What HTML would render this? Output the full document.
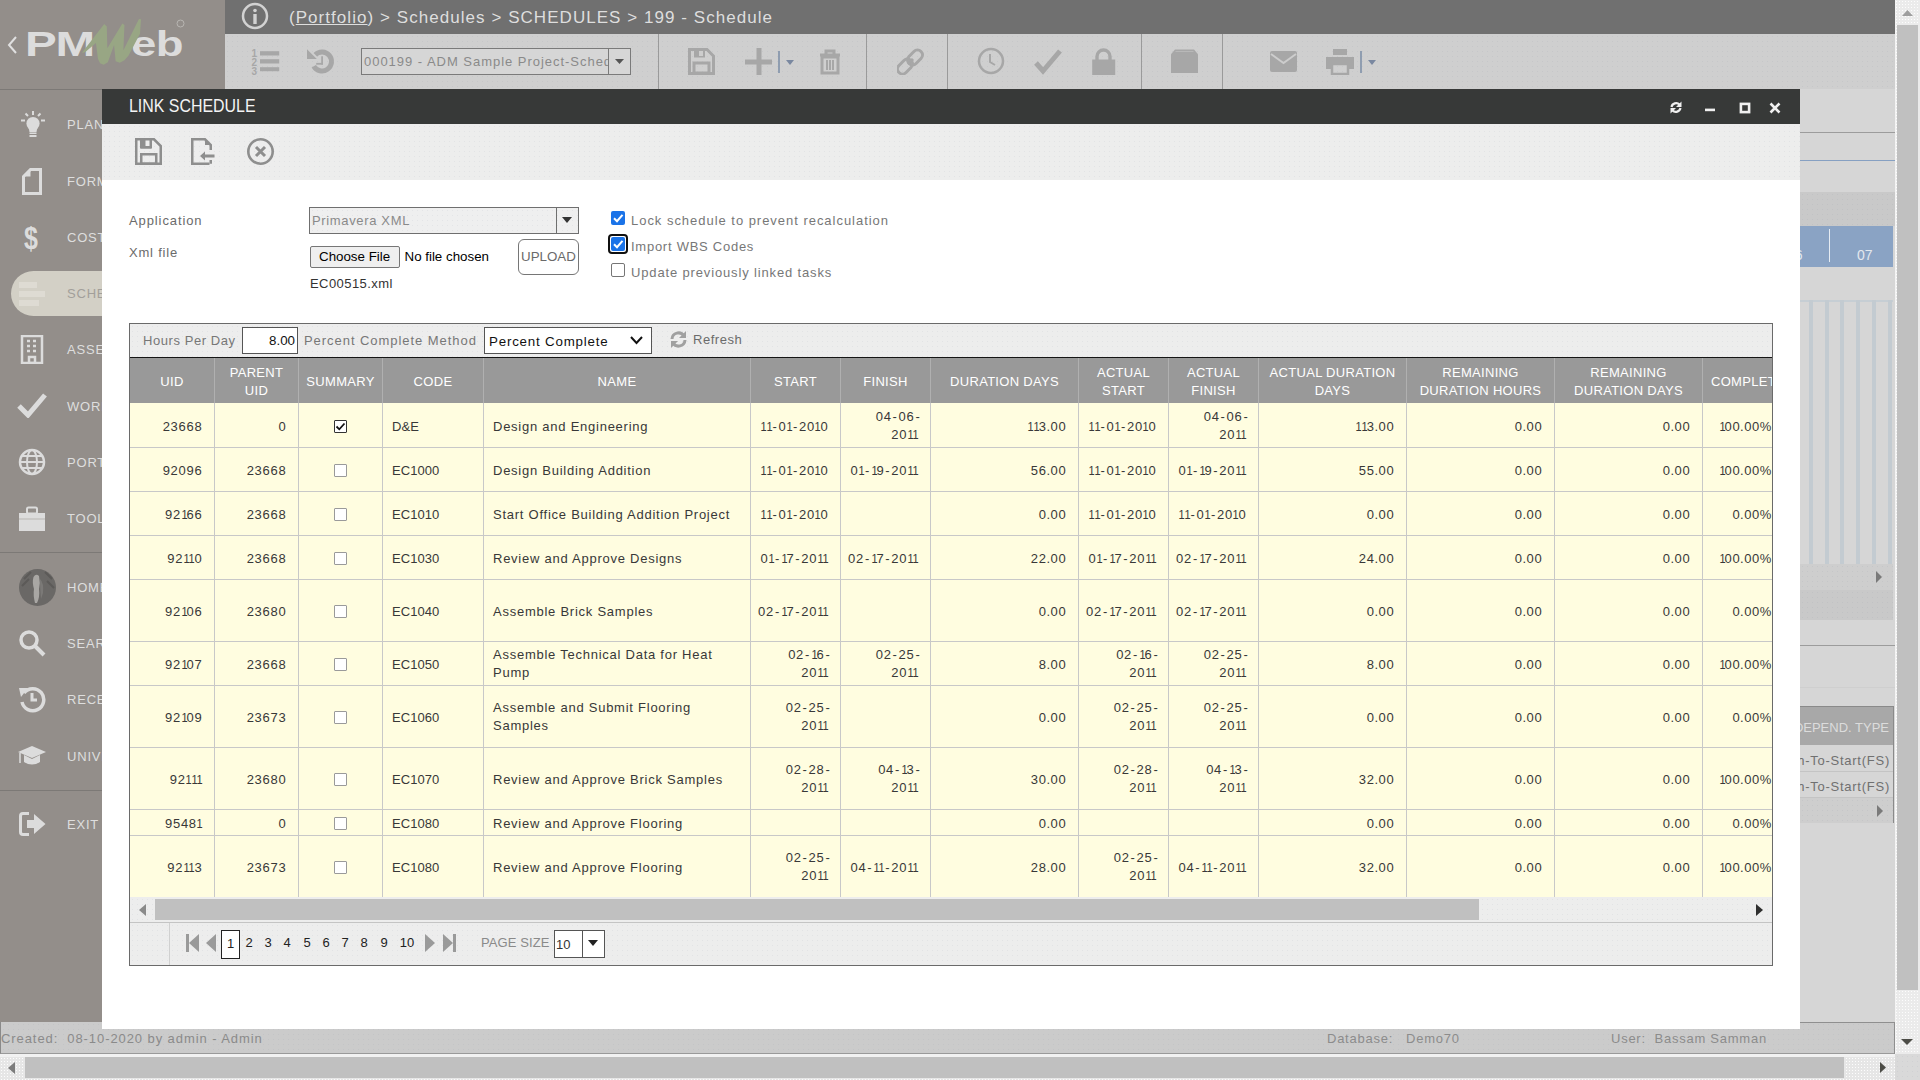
<!DOCTYPE html><html><head><meta charset="utf-8"><style>
html,body{margin:0;padding:0;width:1920px;height:1080px;overflow:hidden;background:#d6d6d6;font-family:"Liberation Sans", sans-serif;}
.b{position:absolute;box-sizing:border-box;}
.t{position:absolute;white-space:nowrap;font-family:"Liberation Sans", sans-serif;}
.clip{position:absolute;overflow:hidden;}
</style></head><body>
<div class="b" style="left:0px;top:0px;width:225px;height:1022px;background:#938e8a;"></div>
<div class="b" style="left:0px;top:89px;width:225px;height:1px;background:#7c7976;"></div>
<div class="b" style="left:0px;top:552px;width:225px;height:1px;background:#7c7976;"></div>
<div class="b" style="left:0px;top:790px;width:225px;height:1px;background:#7c7976;"></div>
<div class="b" style="left:11px;top:271px;width:250px;height:45px;background:#d3d0c6;border-radius:23px;"></div>
<svg class="b" style="left:7px;top:36px;" width="11" height="18" viewBox="0 0 11 18"><path d="M9 1 L2 9 L9 17" fill="none" stroke="#e0e0e0" stroke-width="2"/></svg>
<div class="t" style="left:25px;top:23.5px;font-size:35px;line-height:40px;font-weight:700;color:#dcdcdc;transform:scaleX(1.36);transform-origin:0 0;letter-spacing:-1px;">PM</div>
<div class="t" style="left:131px;top:24px;font-size:35px;line-height:40px;font-weight:700;color:#dcdcdc;transform:scaleX(1.3);transform-origin:0 0;letter-spacing:-0.5px;">eb</div>
<svg class="b" style="left:70px;top:14px;" width="80" height="56" viewBox="0 0 1543 1080"><path d="M230 745 L660 195 L710 240 L720 660 L1010 185 L1050 210 L1030 700 L1330 95 L1370 100 L1350 380 L1130 800 L1050 890 L960 940 L880 910 L850 600 L730 930 L650 980 L580 950 L540 870 L500 560 L290 740 Z" fill="#98a684"/></svg>
<svg class="b" style="left:176px;top:19px;" width="9" height="9" viewBox="0 0 9 9"><circle cx="4.5" cy="4.5" r="3.5" fill="none" stroke="#b8b6b2" stroke-width="1"/></svg>
<div class="t" style="left:67px;top:118.00px;font-size:13px;line-height:13px;color:#dedede;letter-spacing:0.8px;">PLANNING</div>
<div class="t" style="left:67px;top:175.00px;font-size:13px;line-height:13px;color:#dedede;letter-spacing:0.8px;">FORMS</div>
<div class="t" style="left:67px;top:231.00px;font-size:13px;line-height:13px;color:#dedede;letter-spacing:0.8px;">COSTS</div>
<div class="t" style="left:67px;top:287.00px;font-size:13px;line-height:13px;color:#a29f9a;letter-spacing:0.8px;">SCHEDULES</div>
<div class="t" style="left:67px;top:343.00px;font-size:13px;line-height:13px;color:#dedede;letter-spacing:0.8px;">ASSETS</div>
<div class="t" style="left:67px;top:400.00px;font-size:13px;line-height:13px;color:#dedede;letter-spacing:0.8px;">WORKFLOW</div>
<div class="t" style="left:67px;top:456.00px;font-size:13px;line-height:13px;color:#dedede;letter-spacing:0.8px;">PORTFOLIO</div>
<div class="t" style="left:67px;top:512.00px;font-size:13px;line-height:13px;color:#dedede;letter-spacing:0.8px;">TOOLS</div>
<div class="t" style="left:67px;top:581.00px;font-size:13px;line-height:13px;color:#dedede;letter-spacing:0.8px;">HOME</div>
<div class="t" style="left:67px;top:637.00px;font-size:13px;line-height:13px;color:#dedede;letter-spacing:0.8px;">SEARCH</div>
<div class="t" style="left:67px;top:693.00px;font-size:13px;line-height:13px;color:#dedede;letter-spacing:0.8px;">RECENT</div>
<div class="t" style="left:67px;top:750.00px;font-size:13px;line-height:13px;color:#dedede;letter-spacing:0.8px;">UNIVERSITY</div>
<div class="t" style="left:67px;top:818.00px;font-size:13px;line-height:13px;color:#dedede;letter-spacing:0.8px;">EXIT</div>
<svg class="b" style="left:18px;top:108px;" width="30" height="32" viewBox="0 0 30 32"><circle cx="15" cy="15.5" r="6.6" fill="#dcdcdc"/><path d="M10.5 19 H19.5 L18.5 24 H11.5 Z" fill="#dcdcdc"/><rect x="11.5" y="24.5" width="7" height="1.5" fill="#dcdcdc"/><rect x="11.5" y="27" width="7" height="2" fill="#dcdcdc"/><path d="M3 12.5h4M23 12.5h4M7.5 5.5l2.5 2.5M22.5 5.5l-2.5 2.5M15 3v4" stroke="#dcdcdc" stroke-width="2"/></svg>
<svg class="b" style="left:22px;top:168px;" width="21" height="28" viewBox="0 0 21 28"><path d="M1.5 8.5 L8.5 1.5 H18.5 V25.5 H1.5 Z" fill="none" stroke="#dcdcdc" stroke-width="3"/><path d="M1.5 8.5 L8.5 1.5 V8.5 Z" fill="#dcdcdc"/></svg>
<div class="t" style="left:24px;top:221px;font-size:32px;line-height:34px;color:#dcdcdc;font-weight:700;transform:scaleX(0.78);transform-origin:0 0;">$</div>
<svg class="b" style="left:19px;top:282px;" width="26" height="24" viewBox="0 0 26 24"><rect x="0" y="0" width="18" height="6" fill="#dedbd3"/><rect x="0" y="9" width="26" height="6" fill="#dedbd3"/><rect x="0" y="18" width="20" height="6" fill="#dedbd3"/></svg>
<svg class="b" style="left:20px;top:335px;" width="24" height="29" viewBox="0 0 24 29"><rect x="2" y="1" width="20" height="27" fill="none" stroke="#dcdcdc" stroke-width="2.5"/><path d="M7 6h3M13 6h3M7 11h3M13 11h3M7 16h3M13 16h3M9 22h6v6h-6z" stroke="#dcdcdc" stroke-width="2.5" fill="none"/></svg>
<svg class="b" style="left:17px;top:392px;" width="30" height="26" viewBox="0 0 30 26"><path d="M2 14 L11 23 L28 3" fill="none" stroke="#dcdcdc" stroke-width="5"/></svg>
<svg class="b" style="left:18px;top:448px;" width="28" height="28" viewBox="0 0 28 28"><circle cx="14" cy="14" r="12" fill="none" stroke="#dcdcdc" stroke-width="2.5"/><ellipse cx="14" cy="14" rx="5" ry="12" fill="none" stroke="#dcdcdc" stroke-width="2"/><path d="M2 14h24M4 8h20M4 20h20" stroke="#dcdcdc" stroke-width="2"/></svg>
<svg class="b" style="left:18px;top:506px;" width="28" height="26" viewBox="0 0 28 26"><rect x="1" y="7" width="26" height="18" fill="#dcdcdc"/><rect x="9" y="1.5" width="10" height="6" rx="1.5" fill="none" stroke="#dcdcdc" stroke-width="2"/><rect x="1" y="12.5" width="26" height="1" fill="#b8b5b1"/></svg>
<svg class="b" style="left:19px;top:569px;" width="37" height="37" viewBox="0 0 37 37"><circle cx="18.5" cy="18.5" r="18.5" fill="#6a6866"/><path d="M5 10 L12 3 M3 17 L10 10 M26 3 L33 10 M28 12 L35 19" stroke="#5c5a58" stroke-width="2"/><path d="M14.5 8 Q17 4 20 7 Q21.5 14 20 20 Q21 28 18 34 L16 34 Q14 26 15 20 Q13 13 14.5 8 Z" fill="#a9a7a4"/><path d="M21 10 Q25 14 24 24 L22 30 Q21 20 21 10 Z" fill="#7b7977"/></svg>
<svg class="b" style="left:18px;top:629px;" width="28" height="28" viewBox="0 0 28 28"><circle cx="11" cy="11" r="8" fill="none" stroke="#dcdcdc" stroke-width="3.5"/><path d="M17 17 L26 26" stroke="#dcdcdc" stroke-width="4"/></svg>
<svg class="b" style="left:18px;top:685px;" width="28" height="28" viewBox="0 0 28 28"><path d="M6 8 A11 11 0 1 1 4 17" fill="none" stroke="#dcdcdc" stroke-width="3.5"/><path d="M1 3 L10 3 L3 12 Z" fill="#dcdcdc"/><path d="M14 8v7h5" stroke="#dcdcdc" stroke-width="3" fill="none"/></svg>
<svg class="b" style="left:17px;top:744px;" width="30" height="24" viewBox="0 0 30 24"><path d="M1 8 L15 2 L29 8 L15 14 Z" fill="#dcdcdc"/><path d="M7 11v7q8 5 16 0v-7l-8 4z" fill="#dcdcdc"/><path d="M3 9v10" stroke="#dcdcdc" stroke-width="1.5"/></svg>
<svg class="b" style="left:18px;top:811px;" width="29" height="26" viewBox="0 0 29 26"><path d="M11 2.5 H5 Q2.5 2.5 2.5 5 V21 Q2.5 23.5 5 23.5 H11" fill="none" stroke="#dcdcdc" stroke-width="3"/><path d="M9 9 H16 V3 L27.5 13 L16 23 V17 H9 Z" fill="#dcdcdc"/></svg>
<div class="b" style="left:225px;top:0px;width:1670px;height:34px;background:#707070;"></div>
<svg class="b" style="left:241px;top:2px;" width="28" height="28" viewBox="0 0 28 28"><circle cx="14" cy="14" r="12" fill="none" stroke="#d2d2d2" stroke-width="2.5"/><circle cx="14" cy="8.5" r="1.8" fill="#d2d2d2"/><rect x="12.3" y="12" width="3.4" height="10" fill="#d2d2d2"/></svg>
<div class="t" style="left:289px;top:7px;font-size:17px;line-height:22px;color:#dedede;letter-spacing:1.05px;">(<span style="text-decoration:underline;">Portfolio</span>) &gt; Schedules &gt; SCHEDULES &gt; 199 - Schedule</div>
<div class="b" style="left:225px;top:34px;width:1670px;height:55px;background:#cfcfcf;background-image:radial-gradient(circle, rgba(90,110,130,0.07) 0.7px, transparent 0.9px);background-size:5px 5px;"></div>
<div class="b" style="left:658px;top:34px;width:1px;height:55px;background:#9a9a9a;"></div>
<div class="b" style="left:866px;top:34px;width:1px;height:55px;background:#9a9a9a;"></div>
<div class="b" style="left:947px;top:34px;width:1px;height:55px;background:#9a9a9a;"></div>
<div class="b" style="left:1141px;top:34px;width:1px;height:55px;background:#9a9a9a;"></div>
<div class="b" style="left:1222px;top:34px;width:1px;height:55px;background:#9a9a9a;"></div>
<svg class="b" style="left:251px;top:47px;" width="30" height="29" viewBox="0 0 30 29"><text x="0.5" y="9.5" font-size="10" font-family="Liberation Sans" font-weight="700" fill="#a7a7a7">1</text><text x="0.5" y="18.5" font-size="10" font-family="Liberation Sans" font-weight="700" fill="#a7a7a7">2</text><text x="0.5" y="27.5" font-size="10" font-family="Liberation Sans" font-weight="700" fill="#a7a7a7">3</text><rect x="9" y="4.2" width="19.2" height="4.3" fill="#a7a7a7"/><rect x="9" y="12.2" width="19.2" height="4.3" fill="#a7a7a7"/><rect x="9" y="20.2" width="19.2" height="4" fill="#a7a7a7"/></svg>
<svg class="b" style="left:306px;top:48px;" width="30" height="28" viewBox="0 0 30 28"><path d="M9.28 6.78 A9.5 9.5 0 1 1 7.77 18.25" fill="none" stroke="#a7a7a7" stroke-width="5"/><path d="M1 1.2 L1 10.9 L10.8 10.9 Z" fill="#a7a7a7"/><rect x="15.2" y="8.3" width="1.8" height="8.3" fill="#a7a7a7"/><rect x="10.2" y="14.9" width="6.8" height="1.8" fill="#a7a7a7"/></svg>
<div class="b" style="left:361px;top:48px;width:270px;height:27px;background:#d6d6d6;border:1px solid #7a7a7a;"></div>
<div class="b" style="left:608px;top:48px;width:1px;height:27px;background:#7a7a7a;"></div>
<svg class="b" style="left:615px;top:59px;" width="10" height="6" viewBox="0 0 10 6"><path d="M0 0 H9 L4.5 5 Z" fill="#555"/></svg>
<div class="clip" style="left:362px;top:49px;width:246px;height:25px;"><div class="t" style="left:2px;top:4px;font-size:13px;line-height:17px;color:#8a8a8a;letter-spacing:0.97px;">000199 - ADM Sample Project-Schedule</div></div>
<svg class="b" style="left:688px;top:48px;" width="27" height="27" viewBox="0 0 27 27"><path d="M1.5 1.5 H19 L25.5 8 V25.5 H1.5 Z" fill="none" stroke="#a7a7a7" stroke-width="3"/><rect x="6" y="1.5" width="11" height="8" fill="#a7a7a7"/><rect x="11" y="3" width="4" height="5" fill="#cdcdcd"/><rect x="6" y="15" width="15" height="10" fill="none" stroke="#a7a7a7" stroke-width="3"/></svg>
<svg class="b" style="left:745px;top:48px;" width="28" height="28" viewBox="0 0 28 28"><rect x="0" y="11.5" width="27" height="5" fill="#a7a7a7"/><rect x="11.5" y="0" width="5" height="27" fill="#a7a7a7"/></svg>
<div class="b" style="left:778px;top:51px;width:2px;height:22px;background:#8f9db0;"></div>
<svg class="b" style="left:786px;top:60px;" width="9" height="6" viewBox="0 0 9 6"><path d="M0 0 H8 L4 5 Z" fill="#7a88a0"/></svg>
<svg class="b" style="left:817px;top:48px;" width="26" height="27" viewBox="0 0 26 27"><path d="M3 7 H23 M9 7 V3 H17 V7" fill="none" stroke="#a7a7a7" stroke-width="3"/><path d="M5 9 H21 V25 H5 Z" fill="none" stroke="#a7a7a7" stroke-width="3"/><path d="M10 12v10M13 12v10M16 12v10" stroke="#a7a7a7" stroke-width="2"/></svg>
<svg class="b" style="left:897px;top:48px;" width="27" height="27" viewBox="0 0 27 27"><path d="M11 16 L16 11" stroke="#a7a7a7" stroke-width="3"/><rect x="13" y="1" width="10" height="17" rx="5" transform="rotate(45 18 9.5)" fill="none" stroke="#a7a7a7" stroke-width="3"/><rect x="3" y="10" width="10" height="17" rx="5" transform="rotate(45 8 18.5)" fill="none" stroke="#a7a7a7" stroke-width="3"/></svg>
<svg class="b" style="left:977px;top:47px;" width="28" height="28" viewBox="0 0 28 28"><circle cx="14" cy="14" r="12" fill="none" stroke="#a7a7a7" stroke-width="2.5"/><path d="M13 7 V15 L18 18" fill="none" stroke="#a7a7a7" stroke-width="2"/></svg>
<svg class="b" style="left:1034px;top:48px;" width="28" height="27" viewBox="0 0 28 27"><path d="M2 15 L9 23 L26 3" fill="none" stroke="#a7a7a7" stroke-width="5"/></svg>
<svg class="b" style="left:1091px;top:47px;" width="26" height="29" viewBox="0 0 26 29"><path d="M6 13 V9.5 A6.5 6.5 0 0 1 19 9.5 V13" fill="none" stroke="#a7a7a7" stroke-width="3.4"/><rect x="1.2" y="12.5" width="23" height="15.5" fill="#a7a7a7"/></svg>
<svg class="b" style="left:1171px;top:49px;" width="28" height="25" viewBox="0 0 28 25"><path d="M0 5.2 L4 0.5 H23 L27 5.2 V24 H0 Z" fill="#a7a7a7"/><path d="M4.5 2.5 H22.5" stroke="#bdbdbd" stroke-width="0.8"/></svg>
<svg class="b" style="left:1270px;top:51px;" width="28" height="22" viewBox="0 0 28 22"><rect x="0" y="0" width="27" height="21" rx="2" fill="#a7a7a7"/><path d="M1 3 L13.5 12 L26 3" fill="none" stroke="#cdcdcd" stroke-width="2"/></svg>
<svg class="b" style="left:1326px;top:49px;" width="28" height="26" viewBox="0 0 28 26"><rect x="7" y="0" width="14" height="6" fill="#a7a7a7"/><path d="M0 8 H28 V20 H23 V14 H5 V20 H0 Z" fill="#a7a7a7"/><rect x="6" y="15" width="16" height="10" fill="none" stroke="#a7a7a7" stroke-width="2.5"/></svg>
<div class="b" style="left:1360px;top:51px;width:2px;height:22px;background:#8f9db0;"></div>
<svg class="b" style="left:1368px;top:60px;" width="9" height="6" viewBox="0 0 9 6"><path d="M0 0 H8 L4 5 Z" fill="#7a88a0"/></svg>
<div class="b" style="left:1800px;top:89px;width:95px;height:933px;background:#d6d6d6;"></div>
<div class="b" style="left:1800px;top:132px;width:95px;height:1px;background:#9c9c9c;"></div>
<div class="b" style="left:1800px;top:160px;width:95px;height:1px;background:#86a0c2;"></div>
<div class="b" style="left:1800px;top:192px;width:95px;height:34px;background:#c9c9c9;background-image:radial-gradient(circle, rgba(90,110,130,0.07) 0.7px, transparent 0.9px);background-size:5px 5px;"></div>
<div class="b" style="left:1800px;top:226px;width:93px;height:41px;background:#8aa3c4;"></div>
<div class="b" style="left:1829px;top:229px;width:1px;height:33px;background:#e6ecf3;"></div>
<div class="t" style="left:1857px;top:248.15px;font-size:14px;line-height:14px;color:#e3e8ee;">07</div>
<div class="clip" style="left:1800px;top:226px;width:10px;height:41px;"><div class="t" style="left:-13px;top:22px;font-size:14px;line-height:14px;color:#e3e8ee;">06</div></div>
<div class="b" style="left:1800px;top:300px;width:93px;height:264px;background:#d6d6d6;"></div>
<div class="b" style="left:1800px;top:300px;width:93px;height:2px;background:#c6ced4;"></div>
<div class="b" style="left:1809px;top:300px;width:3.5px;height:264px;background:#c3cbd1;"></div>
<div class="b" style="left:1825px;top:300px;width:3.5px;height:264px;background:#c3cbd1;"></div>
<div class="b" style="left:1840px;top:300px;width:3.5px;height:264px;background:#c3cbd1;"></div>
<div class="b" style="left:1856px;top:300px;width:3.5px;height:264px;background:#c3cbd1;"></div>
<div class="b" style="left:1872px;top:300px;width:3.5px;height:264px;background:#c3cbd1;"></div>
<div class="b" style="left:1888px;top:300px;width:3.5px;height:264px;background:#c3cbd1;"></div>
<div class="b" style="left:1800px;top:564px;width:93px;height:26px;background:#cecece;background-image:radial-gradient(circle, rgba(90,110,130,0.07) 0.7px, transparent 0.9px);background-size:5px 5px;"></div>
<svg class="b" style="left:1876px;top:571px;" width="7" height="12" viewBox="0 0 7 12"><path d="M0 0 L6 6 L0 12 Z" fill="#7a7a7a"/></svg>
<div class="b" style="left:1800px;top:590px;width:93px;height:30px;background:#c9c9c9;background-image:radial-gradient(circle, rgba(90,110,130,0.07) 0.7px, transparent 0.9px);background-size:5px 5px;"></div>
<div class="b" style="left:1800px;top:645px;width:95px;height:1px;background:#9c9c9c;"></div>
<div class="b" style="left:1800px;top:687px;width:95px;height:1px;background:#cfcfcf;"></div>
<div class="b" style="left:1800px;top:706px;width:94px;height:1px;background:#8a8a8a;"></div>
<div class="b" style="left:1800px;top:707px;width:93px;height:38px;background:#a8a8a8;"></div>
<div class="clip" style="left:1800px;top:707px;width:93px;height:38px;"><div class="t" style="right:4px;top:14px;font-size:13px;line-height:13px;color:#dcdcdc;letter-spacing:0px;">DEPEND. TYPE</div></div>
<div class="clip" style="left:1800px;top:745px;width:93px;height:53px;"><div class="t" style="right:3px;top:9px;font-size:13px;line-height:13px;color:#707070;letter-spacing:0.75px;">Finish-To-Start(FS)</div><div class="t" style="right:3px;top:35px;font-size:13px;line-height:13px;color:#707070;letter-spacing:0.75px;">Finish-To-Start(FS)</div></div>
<div class="b" style="left:1800px;top:771px;width:93px;height:1px;background:#c4c4c4;"></div>
<div class="b" style="left:1800px;top:797px;width:93px;height:1px;background:#c4c4c4;"></div>
<div class="b" style="left:1800px;top:798px;width:93px;height:25px;background:#cecece;background-image:radial-gradient(circle, rgba(90,110,130,0.07) 0.7px, transparent 0.9px);background-size:5px 5px;"></div>
<svg class="b" style="left:1877px;top:805px;" width="7" height="12" viewBox="0 0 7 12"><path d="M0 0 L6 6 L0 12 Z" fill="#7a7a7a"/></svg>
<div class="b" style="left:1893px;top:706px;width:1px;height:117px;background:#8a8a8a;"></div>
<div class="b" style="left:1895px;top:0px;width:25px;height:1054px;background:#ebebeb;background-image:radial-gradient(circle, rgba(255,255,255,0.9) 0.8px, transparent 1px);background-size:3px 3px;"></div>
<div class="b" style="left:1895px;top:0px;width:1px;height:1054px;background:#f4f4f4;"></div>
<div class="b" style="left:1897px;top:25px;width:21px;height:965px;background:#c0c0c0;"></div>
<svg class="b" style="left:1902px;top:10px;" width="11" height="6" viewBox="0 0 11 6"><path d="M0 6 L5.5 0 L11 6 Z" fill="#9e9e9e"/></svg>
<svg class="b" style="left:1901px;top:1039px;" width="12" height="6" viewBox="0 0 12 6"><path d="M0 0 L6 6 L12 0 Z" fill="#4c4c46"/></svg>
<div class="b" style="left:0px;top:1022px;width:1895px;height:32px;background:#cbcbcb;border-left:1px solid #8a8a8a;border-bottom:1px solid #9a9a9a;background-image:radial-gradient(circle, rgba(90,110,130,0.07) 0.7px, transparent 0.9px);background-size:5px 5px;"></div>
<div class="t" style="left:1px;top:1032.00px;font-size:13px;line-height:13px;color:#8a8a8a;letter-spacing:0.92px;">Created:&nbsp; 08-10-2020 by admin - Admin</div>
<div class="t" style="left:1327px;top:1032.00px;font-size:13px;line-height:13px;color:#8c8c8c;letter-spacing:0.75px;">Database:&nbsp;&nbsp; Demo70</div>
<div class="t" style="left:1611px;top:1032.00px;font-size:13px;line-height:13px;color:#8c8c8c;letter-spacing:0.75px;">User:&nbsp; Bassam Samman</div>
<div class="b" style="left:0px;top:1054px;width:1920px;height:26px;background:#e6e6e6;background-image:radial-gradient(circle, rgba(255,255,255,0.9) 0.8px, transparent 1px);background-size:3px 3px;"></div>
<div class="b" style="left:0px;top:1054px;width:1895px;height:3px;background:#f2f2f2;"></div>
<div class="b" style="left:25px;top:1057px;width:1819px;height:21px;background:#c0c0c0;"></div>
<svg class="b" style="left:8px;top:1062px;" width="7" height="12" viewBox="0 0 7 12"><path d="M7 0 L0 6 L7 12 Z" fill="#7c7c7c"/></svg>
<svg class="b" style="left:1880px;top:1062px;" width="6" height="11" viewBox="0 0 6 11"><path d="M0 0 L6 5.5 L0 11 Z" fill="#4c4c46"/></svg>
<div class="b" style="left:1895px;top:1054px;width:25px;height:26px;background:#d9d9d9;background-image:radial-gradient(circle, rgba(90,110,130,0.07) 0.7px, transparent 0.9px);background-size:5px 5px;"></div>
<div class="b" style="left:1800px;top:1022px;width:95px;height:1px;background:#8f8f8f;"></div>
<div class="b" style="left:1894px;top:1022px;width:1px;height:32px;background:#8f8f8f;"></div>
<div class="b" style="left:102px;top:89px;width:1698px;height:940px;background:#ffffff;"></div>
<div class="b" style="left:102px;top:89px;width:1698px;height:35px;background:#373938;"></div>
<div class="t" style="left:129px;top:94px;font-size:18px;line-height:24px;color:#f4f4f4;transform:scaleX(0.885);transform-origin:0 0;">LINK SCHEDULE</div>
<svg class="b" style="left:1669px;top:101px;" width="14" height="13" viewBox="0 0 14 13"><path d="M2.5 6 A4.8 4.8 0 0 1 10.5 3.5" fill="none" stroke="#f0f0f0" stroke-width="2.2"/><path d="M12.5 0.5 V6 H7 Z" fill="#f0f0f0"/><path d="M11.5 7 A4.8 4.8 0 0 1 3.5 9.5" fill="none" stroke="#f0f0f0" stroke-width="2.2"/><path d="M1.5 12.5 V7 H7 Z" fill="#f0f0f0"/></svg>
<svg class="b" style="left:1705px;top:108px;" width="10" height="4" viewBox="0 0 10 4"><rect x="0" y="0.6" width="10" height="2.6" fill="#f0f0f0"/></svg>
<svg class="b" style="left:1739px;top:102px;" width="12" height="12" viewBox="0 0 12 12"><rect x="1.9" y="1.9" width="8.2" height="8.2" fill="none" stroke="#f0f0f0" stroke-width="2.6"/></svg>
<svg class="b" style="left:1769px;top:102px;" width="12" height="12" viewBox="0 0 12 12"><path d="M1.5 1.5 L10.5 10.5 M10.5 1.5 L1.5 10.5" stroke="#f0f0f0" stroke-width="2.6"/></svg>
<div class="b" style="left:102px;top:124px;width:1698px;height:56px;background:#ededed;background-image:radial-gradient(circle, rgba(90,110,130,0.07) 0.7px, transparent 0.9px);background-size:5px 5px;"></div>
<svg class="b" style="left:135px;top:138px;" width="27" height="27" viewBox="0 0 27 27"><path d="M1.25 1.25 H19 L25.75 8 V25.75 H1.25 Z" fill="none" stroke="#8e8e8e" stroke-width="2.5"/><rect x="5" y="1.25" width="12" height="9.5" rx="1" fill="#8e8e8e"/><rect x="10.5" y="2.5" width="4" height="5.5" fill="#ededed"/><rect x="6.25" y="16.25" width="15" height="9.5" fill="none" stroke="#8e8e8e" stroke-width="2.5"/></svg>
<svg class="b" style="left:191px;top:138px;" width="24" height="27" viewBox="0 0 24 27"><path d="M18.5 25.75 H1.25 V1.25 H14 L19.75 7 V12" fill="none" stroke="#8e8e8e" stroke-width="2.5"/><path d="M14 1.25 V7 H19.75 Z" fill="#8e8e8e"/><path d="M19.75 22 V25.75" stroke="#8e8e8e" stroke-width="2.5"/><path d="M9 18 L14 13.5 V16.5 H23.5 V19.5 H14 V22.5 Z" fill="#8e8e8e"/></svg>
<svg class="b" style="left:247px;top:138px;" width="27" height="27" viewBox="0 0 27 27"><circle cx="13.5" cy="13.5" r="12.2" fill="none" stroke="#8e8e8e" stroke-width="2.6"/><path d="M9 9 L18 18 M18 9 L9 18" stroke="#8e8e8e" stroke-width="3"/></svg>
<div class="t" style="left:129px;top:214.00px;font-size:13px;line-height:13px;color:#6b6b6b;letter-spacing:0.9px;">Application</div>
<div class="t" style="left:129px;top:246.00px;font-size:13px;line-height:13px;color:#6b6b6b;letter-spacing:0.8px;">Xml file</div>
<div class="b" style="left:309px;top:207px;width:270px;height:27px;background:#efefef;border:1px solid #6f6f6f;background-image:radial-gradient(circle, rgba(90,110,130,0.07) 0.7px, transparent 0.9px);background-size:5px 5px;"></div>
<div class="b" style="left:556px;top:207px;width:1px;height:27px;background:#6f6f6f;"></div>
<svg class="b" style="left:562px;top:217px;" width="11" height="7" viewBox="0 0 11 7"><path d="M0 0 H10 L5 6 Z" fill="#333"/></svg>
<div class="t" style="left:312px;top:214.00px;font-size:13px;line-height:13px;color:#8a8a8a;letter-spacing:0.65px;">Primavera XML</div>
<div class="b" style="left:310px;top:246px;width:90px;height:22px;background:#efefef;border:1px solid #767676;border-radius:2px;"></div>
<div class="t" style="left:319px;top:250.22px;font-size:13.33px;line-height:13.33px;color:#000;">Choose File</div>
<div class="t" style="left:404.5px;top:250.22px;font-size:13.33px;line-height:13.33px;color:#000;">No file chosen</div>
<div class="b" style="left:518px;top:239px;width:61px;height:36px;background:#fff;border:1px solid #767676;border-radius:6px;"></div>
<div class="t" style="left:521px;top:250.22px;font-size:13.33px;line-height:13.33px;color:#6a6a6a;">UPLOAD</div>
<div class="t" style="left:310px;top:277.00px;font-size:13px;line-height:13px;color:#333;letter-spacing:0.43px;">EC00515.xml</div>
<div class="b" style="left:611px;top:211px;width:14px;height:14px;background:#1a73e8;border-radius:2px;"></div>
<svg class="b" style="left:611px;top:211px;" width="14" height="14" viewBox="0 0 14 14"><path d="M3 7.2 L6 10.2 L11.5 3.8" fill="none" stroke="#fff" stroke-width="2"/></svg>
<div class="b" style="left:608px;top:234px;width:20px;height:20px;border:2px solid #101010;border-radius:4px;"></div>
<div class="b" style="left:611px;top:237px;width:14px;height:14px;background:#1a73e8;border-radius:2px;"></div>
<svg class="b" style="left:611px;top:237px;" width="14" height="14" viewBox="0 0 14 14"><path d="M3 7.2 L6 10.2 L11.5 3.8" fill="none" stroke="#fff" stroke-width="2"/></svg>
<div class="b" style="left:611px;top:263px;width:14px;height:14px;background:#fff;border:1px solid #767676;border-radius:2px;"></div>
<div class="t" style="left:631px;top:214.00px;font-size:13px;line-height:13px;color:#777;letter-spacing:0.97px;">Lock schedule to prevent recalculation</div>
<div class="t" style="left:631px;top:240.00px;font-size:13px;line-height:13px;color:#777;letter-spacing:0.74px;">Import WBS Codes</div>
<div class="t" style="left:631px;top:266.00px;font-size:13px;line-height:13px;color:#777;letter-spacing:0.85px;">Update previously linked tasks</div>
<div class="b" style="left:129px;top:323px;width:1644px;height:643px;background:#ededed;border:1px solid #6a6a6a;"></div>
<div class="b" style="left:130px;top:324px;width:1642px;height:33px;background:#ededed;background-image:radial-gradient(circle, rgba(90,110,130,0.07) 0.7px, transparent 0.9px);background-size:5px 5px;"></div>
<div class="t" style="left:143px;top:334.00px;font-size:13px;line-height:13px;color:#777;letter-spacing:0.56px;">Hours Per Day</div>
<div class="b" style="left:242px;top:327px;width:56px;height:27px;background:#fff;border:1px solid #555;"></div>
<div class="t" style="right:1625px;top:333.72px;font-size:13.33px;line-height:13.33px;color:#111;">8.00</div>
<div class="t" style="left:304px;top:334.00px;font-size:13px;line-height:13px;color:#777;letter-spacing:0.95px;">Percent Complete Method</div>
<div class="b" style="left:484px;top:327px;width:168px;height:27px;background:#fff;border:1px solid #555;"></div>
<div class="t" style="left:489px;top:334.72px;font-size:13.33px;line-height:13.33px;color:#111;letter-spacing:0.8px;">Percent Complete</div>
<svg class="b" style="left:630px;top:336px;" width="13" height="9" viewBox="0 0 13 9"><path d="M1 1 L6.5 7 L12 1" fill="none" stroke="#111" stroke-width="2"/></svg>
<svg class="b" style="left:669px;top:330px;" width="19" height="19" viewBox="0 0 19 19"><path d="M3 9 A6.5 6.5 0 0 1 15 6" fill="none" stroke="#a0a0a0" stroke-width="3"/><path d="M17 1 V8 H10 Z" fill="#a0a0a0"/><path d="M16 10 A6.5 6.5 0 0 1 4 13" fill="none" stroke="#a0a0a0" stroke-width="3"/><path d="M2 18 V11 H9 Z" fill="#a0a0a0"/></svg>
<div class="t" style="left:693px;top:333.00px;font-size:13px;line-height:13px;color:#6b6b6b;letter-spacing:0.54px;">Refresh</div>
<div class="b" style="left:130px;top:357px;width:1642px;height:1px;background:#151515;"></div>
<div class="clip" style="left:130px;top:358px;width:1642px;height:539px;">
<div class="b" style="left:0px;top:0px;width:1800px;height:45px;background:#999999;"></div>
<div class="b" style="left:84px;top:0px;width:1px;height:45px;background:#b0b0b0;"></div>
<div class="b" style="left:168px;top:0px;width:1px;height:45px;background:#b0b0b0;"></div>
<div class="b" style="left:252px;top:0px;width:1px;height:45px;background:#b0b0b0;"></div>
<div class="b" style="left:353px;top:0px;width:1px;height:45px;background:#b0b0b0;"></div>
<div class="b" style="left:620px;top:0px;width:1px;height:45px;background:#b0b0b0;"></div>
<div class="b" style="left:710px;top:0px;width:1px;height:45px;background:#b0b0b0;"></div>
<div class="b" style="left:800px;top:0px;width:1px;height:45px;background:#b0b0b0;"></div>
<div class="b" style="left:948px;top:0px;width:1px;height:45px;background:#b0b0b0;"></div>
<div class="b" style="left:1038px;top:0px;width:1px;height:45px;background:#b0b0b0;"></div>
<div class="b" style="left:1128px;top:0px;width:1px;height:45px;background:#b0b0b0;"></div>
<div class="b" style="left:1276px;top:0px;width:1px;height:45px;background:#b0b0b0;"></div>
<div class="b" style="left:1424px;top:0px;width:1px;height:45px;background:#b0b0b0;"></div>
<div class="b" style="left:1572px;top:0px;width:1px;height:45px;background:#b0b0b0;"></div>
<div class="t" style="left:-108.0px;width:300px;text-align:center;top:17.00px;font-size:13px;line-height:13px;color:#ffffff;letter-spacing:0.3px;">UID</div>
<div class="t" style="left:-23.5px;width:300px;text-align:center;top:8.00px;font-size:13px;line-height:13px;color:#ffffff;letter-spacing:0.3px;">PARENT</div>
<div class="t" style="left:-23.5px;width:300px;text-align:center;top:26.00px;font-size:13px;line-height:13px;color:#ffffff;letter-spacing:0.3px;">UID</div>
<div class="t" style="left:60.5px;width:300px;text-align:center;top:17.00px;font-size:13px;line-height:13px;color:#ffffff;letter-spacing:0.3px;">SUMMARY</div>
<div class="t" style="left:153.0px;width:300px;text-align:center;top:17.00px;font-size:13px;line-height:13px;color:#ffffff;letter-spacing:0.3px;">CODE</div>
<div class="t" style="left:337.0px;width:300px;text-align:center;top:17.00px;font-size:13px;line-height:13px;color:#ffffff;letter-spacing:0.3px;">NAME</div>
<div class="t" style="left:515.5px;width:300px;text-align:center;top:17.00px;font-size:13px;line-height:13px;color:#ffffff;letter-spacing:0.3px;">START</div>
<div class="t" style="left:605.5px;width:300px;text-align:center;top:17.00px;font-size:13px;line-height:13px;color:#ffffff;letter-spacing:0.3px;">FINISH</div>
<div class="t" style="left:724.5px;width:300px;text-align:center;top:17.00px;font-size:13px;line-height:13px;color:#ffffff;letter-spacing:0.3px;">DURATION DAYS</div>
<div class="t" style="left:843.5px;width:300px;text-align:center;top:8.00px;font-size:13px;line-height:13px;color:#ffffff;letter-spacing:0.3px;">ACTUAL</div>
<div class="t" style="left:843.5px;width:300px;text-align:center;top:26.00px;font-size:13px;line-height:13px;color:#ffffff;letter-spacing:0.3px;">START</div>
<div class="t" style="left:933.5px;width:300px;text-align:center;top:8.00px;font-size:13px;line-height:13px;color:#ffffff;letter-spacing:0.3px;">ACTUAL</div>
<div class="t" style="left:933.5px;width:300px;text-align:center;top:26.00px;font-size:13px;line-height:13px;color:#ffffff;letter-spacing:0.3px;">FINISH</div>
<div class="t" style="left:1052.5px;width:300px;text-align:center;top:8.00px;font-size:13px;line-height:13px;color:#ffffff;letter-spacing:0.3px;">ACTUAL DURATION</div>
<div class="t" style="left:1052.5px;width:300px;text-align:center;top:26.00px;font-size:13px;line-height:13px;color:#ffffff;letter-spacing:0.3px;">DAYS</div>
<div class="t" style="left:1200.5px;width:300px;text-align:center;top:8.00px;font-size:13px;line-height:13px;color:#ffffff;letter-spacing:0.3px;">REMAINING</div>
<div class="t" style="left:1200.5px;width:300px;text-align:center;top:26.00px;font-size:13px;line-height:13px;color:#ffffff;letter-spacing:0.3px;">DURATION HOURS</div>
<div class="t" style="left:1348.5px;width:300px;text-align:center;top:8.00px;font-size:13px;line-height:13px;color:#ffffff;letter-spacing:0.3px;">REMAINING</div>
<div class="t" style="left:1348.5px;width:300px;text-align:center;top:26.00px;font-size:13px;line-height:13px;color:#ffffff;letter-spacing:0.3px;">DURATION DAYS</div>
<div class="t" style="left:1581px;top:17.00px;font-size:13px;line-height:13px;color:#ffffff;letter-spacing:0.3px;">COMPLETE</div>
<div class="b" style="left:0px;top:45px;width:1800px;height:494px;background:#fffde0;"></div>
<div class="b" style="left:0px;top:89px;width:1800px;height:1px;background:#c8c8c8;"></div>
<div class="b" style="left:0px;top:133px;width:1800px;height:1px;background:#c8c8c8;"></div>
<div class="b" style="left:0px;top:177px;width:1800px;height:1px;background:#c8c8c8;"></div>
<div class="b" style="left:0px;top:221px;width:1800px;height:1px;background:#c8c8c8;"></div>
<div class="b" style="left:0px;top:283px;width:1800px;height:1px;background:#c8c8c8;"></div>
<div class="b" style="left:0px;top:327px;width:1800px;height:1px;background:#c8c8c8;"></div>
<div class="b" style="left:0px;top:389px;width:1800px;height:1px;background:#c8c8c8;"></div>
<div class="b" style="left:0px;top:451px;width:1800px;height:1px;background:#c8c8c8;"></div>
<div class="b" style="left:0px;top:477px;width:1800px;height:1px;background:#c8c8c8;"></div>
<div class="b" style="left:84px;top:45px;width:1px;height:494px;background:#c8c8c8;"></div>
<div class="b" style="left:168px;top:45px;width:1px;height:494px;background:#c8c8c8;"></div>
<div class="b" style="left:252px;top:45px;width:1px;height:494px;background:#c8c8c8;"></div>
<div class="b" style="left:353px;top:45px;width:1px;height:494px;background:#c8c8c8;"></div>
<div class="b" style="left:620px;top:45px;width:1px;height:494px;background:#c8c8c8;"></div>
<div class="b" style="left:710px;top:45px;width:1px;height:494px;background:#c8c8c8;"></div>
<div class="b" style="left:800px;top:45px;width:1px;height:494px;background:#c8c8c8;"></div>
<div class="b" style="left:948px;top:45px;width:1px;height:494px;background:#c8c8c8;"></div>
<div class="b" style="left:1038px;top:45px;width:1px;height:494px;background:#c8c8c8;"></div>
<div class="b" style="left:1128px;top:45px;width:1px;height:494px;background:#c8c8c8;"></div>
<div class="b" style="left:1276px;top:45px;width:1px;height:494px;background:#c8c8c8;"></div>
<div class="b" style="left:1424px;top:45px;width:1px;height:494px;background:#c8c8c8;"></div>
<div class="b" style="left:1572px;top:45px;width:1px;height:494px;background:#c8c8c8;"></div>
<div class="t" style="right:1570px;top:61.60px;font-size:13px;line-height:13px;color:#383838;"><span style="display:inline-block;width:7.95px;text-align:center;">2</span><span style="display:inline-block;width:7.95px;text-align:center;">3</span><span style="display:inline-block;width:7.95px;text-align:center;">6</span><span style="display:inline-block;width:7.95px;text-align:center;">6</span><span style="display:inline-block;width:7.95px;text-align:center;">8</span></div>
<div class="t" style="right:1486px;top:61.60px;font-size:13px;line-height:13px;color:#383838;"><span style="display:inline-block;width:7.95px;text-align:center;">0</span></div>
<div class="b" style="left:204px;top:61.5px;width:13px;height:13px;background:#fff;border:1px solid #333;border-radius:1px;"></div>
<svg class="b" style="left:204px;top:61.5px;" width="13" height="13"><path d="M2.5 6.5 L5.3 9.3 L10.5 3.5" fill="none" stroke="#111" stroke-width="1.8"/></svg>
<div class="t" style="left:262px;top:61.60px;font-size:13px;line-height:13px;color:#383838;letter-spacing:0.05px;">D&amp;E</div>
<div class="t" style="left:363px;top:61.60px;font-size:13px;line-height:13px;color:#383838;letter-spacing:0.75px;">Design and Engineering</div>
<div class="t" style="right:944px;top:61.60px;font-size:13px;line-height:13px;color:#383838;"><span style="display:inline-block;width:5.6px;text-align:center;transform:scaleX(0.85);">1</span><span style="display:inline-block;width:5.6px;text-align:center;transform:scaleX(0.85);">1</span><span style="display:inline-block;width:6.9px;text-align:center;">-</span><span style="display:inline-block;width:7.95px;text-align:center;">0</span><span style="display:inline-block;width:5.6px;text-align:center;transform:scaleX(0.85);">1</span><span style="display:inline-block;width:6.9px;text-align:center;">-</span><span style="display:inline-block;width:7.95px;text-align:center;">2</span><span style="display:inline-block;width:7.95px;text-align:center;">0</span><span style="display:inline-block;width:5.6px;text-align:center;transform:scaleX(0.85);">1</span><span style="display:inline-block;width:7.95px;text-align:center;">0</span></div>
<div class="t" style="right:851px;top:52.40px;font-size:13px;line-height:13px;color:#383838;"><span style="display:inline-block;width:7.95px;text-align:center;">0</span><span style="display:inline-block;width:7.95px;text-align:center;">4</span><span style="display:inline-block;width:6.9px;text-align:center;">-</span><span style="display:inline-block;width:7.95px;text-align:center;">0</span><span style="display:inline-block;width:7.95px;text-align:center;">6</span><span style="display:inline-block;width:6.9px;text-align:center;">-</span></div>
<div class="t" style="right:854px;top:70.40px;font-size:13px;line-height:13px;color:#383838;"><span style="display:inline-block;width:7.95px;text-align:center;">2</span><span style="display:inline-block;width:7.95px;text-align:center;">0</span><span style="display:inline-block;width:5.6px;text-align:center;transform:scaleX(0.85);">1</span><span style="display:inline-block;width:5.6px;text-align:center;transform:scaleX(0.85);">1</span></div>
<div class="t" style="right:706px;top:61.60px;font-size:13px;line-height:13px;color:#383838;"><span style="display:inline-block;width:5.6px;text-align:center;transform:scaleX(0.85);">1</span><span style="display:inline-block;width:5.6px;text-align:center;transform:scaleX(0.85);">1</span><span style="display:inline-block;width:7.95px;text-align:center;">3</span><span style="display:inline-block;width:3.8px;text-align:center;">.</span><span style="display:inline-block;width:7.95px;text-align:center;">0</span><span style="display:inline-block;width:7.95px;text-align:center;">0</span></div>
<div class="t" style="right:616px;top:61.60px;font-size:13px;line-height:13px;color:#383838;"><span style="display:inline-block;width:5.6px;text-align:center;transform:scaleX(0.85);">1</span><span style="display:inline-block;width:5.6px;text-align:center;transform:scaleX(0.85);">1</span><span style="display:inline-block;width:6.9px;text-align:center;">-</span><span style="display:inline-block;width:7.95px;text-align:center;">0</span><span style="display:inline-block;width:5.6px;text-align:center;transform:scaleX(0.85);">1</span><span style="display:inline-block;width:6.9px;text-align:center;">-</span><span style="display:inline-block;width:7.95px;text-align:center;">2</span><span style="display:inline-block;width:7.95px;text-align:center;">0</span><span style="display:inline-block;width:5.6px;text-align:center;transform:scaleX(0.85);">1</span><span style="display:inline-block;width:7.95px;text-align:center;">0</span></div>
<div class="t" style="right:523px;top:52.40px;font-size:13px;line-height:13px;color:#383838;"><span style="display:inline-block;width:7.95px;text-align:center;">0</span><span style="display:inline-block;width:7.95px;text-align:center;">4</span><span style="display:inline-block;width:6.9px;text-align:center;">-</span><span style="display:inline-block;width:7.95px;text-align:center;">0</span><span style="display:inline-block;width:7.95px;text-align:center;">6</span><span style="display:inline-block;width:6.9px;text-align:center;">-</span></div>
<div class="t" style="right:526px;top:70.40px;font-size:13px;line-height:13px;color:#383838;"><span style="display:inline-block;width:7.95px;text-align:center;">2</span><span style="display:inline-block;width:7.95px;text-align:center;">0</span><span style="display:inline-block;width:5.6px;text-align:center;transform:scaleX(0.85);">1</span><span style="display:inline-block;width:5.6px;text-align:center;transform:scaleX(0.85);">1</span></div>
<div class="t" style="right:378px;top:61.60px;font-size:13px;line-height:13px;color:#383838;"><span style="display:inline-block;width:5.6px;text-align:center;transform:scaleX(0.85);">1</span><span style="display:inline-block;width:5.6px;text-align:center;transform:scaleX(0.85);">1</span><span style="display:inline-block;width:7.95px;text-align:center;">3</span><span style="display:inline-block;width:3.8px;text-align:center;">.</span><span style="display:inline-block;width:7.95px;text-align:center;">0</span><span style="display:inline-block;width:7.95px;text-align:center;">0</span></div>
<div class="t" style="right:230px;top:61.60px;font-size:13px;line-height:13px;color:#383838;"><span style="display:inline-block;width:7.95px;text-align:center;">0</span><span style="display:inline-block;width:3.8px;text-align:center;">.</span><span style="display:inline-block;width:7.95px;text-align:center;">0</span><span style="display:inline-block;width:7.95px;text-align:center;">0</span></div>
<div class="t" style="right:82px;top:61.60px;font-size:13px;line-height:13px;color:#383838;"><span style="display:inline-block;width:7.95px;text-align:center;">0</span><span style="display:inline-block;width:3.8px;text-align:center;">.</span><span style="display:inline-block;width:7.95px;text-align:center;">0</span><span style="display:inline-block;width:7.95px;text-align:center;">0</span></div>
<div class="t" style="right:1.7999999999999545px;top:61.60px;font-size:13px;line-height:13px;color:#383838;"><span style="display:inline-block;width:5.6px;text-align:center;transform:scaleX(0.85);">1</span><span style="display:inline-block;width:7.95px;text-align:center;">0</span><span style="display:inline-block;width:7.95px;text-align:center;">0</span><span style="display:inline-block;width:3.8px;text-align:center;">.</span><span style="display:inline-block;width:7.95px;text-align:center;">0</span><span style="display:inline-block;width:7.95px;text-align:center;">0</span><span style="display:inline-block;width:10.5px;text-align:center;">%</span></div>
<div class="t" style="right:1570px;top:105.60px;font-size:13px;line-height:13px;color:#383838;"><span style="display:inline-block;width:7.95px;text-align:center;">9</span><span style="display:inline-block;width:7.95px;text-align:center;">2</span><span style="display:inline-block;width:7.95px;text-align:center;">0</span><span style="display:inline-block;width:7.95px;text-align:center;">9</span><span style="display:inline-block;width:7.95px;text-align:center;">6</span></div>
<div class="t" style="right:1486px;top:105.60px;font-size:13px;line-height:13px;color:#383838;"><span style="display:inline-block;width:7.95px;text-align:center;">2</span><span style="display:inline-block;width:7.95px;text-align:center;">3</span><span style="display:inline-block;width:7.95px;text-align:center;">6</span><span style="display:inline-block;width:7.95px;text-align:center;">6</span><span style="display:inline-block;width:7.95px;text-align:center;">8</span></div>
<div class="b" style="left:204px;top:105.5px;width:13px;height:13px;background:#fff;border:1px solid #9a9a9a;border-radius:1px;"></div>
<div class="t" style="left:262px;top:105.60px;font-size:13px;line-height:13px;color:#383838;letter-spacing:0.05px;">EC1000</div>
<div class="t" style="left:363px;top:105.60px;font-size:13px;line-height:13px;color:#383838;letter-spacing:0.75px;">Design Building Addition</div>
<div class="t" style="right:944px;top:105.60px;font-size:13px;line-height:13px;color:#383838;"><span style="display:inline-block;width:5.6px;text-align:center;transform:scaleX(0.85);">1</span><span style="display:inline-block;width:5.6px;text-align:center;transform:scaleX(0.85);">1</span><span style="display:inline-block;width:6.9px;text-align:center;">-</span><span style="display:inline-block;width:7.95px;text-align:center;">0</span><span style="display:inline-block;width:5.6px;text-align:center;transform:scaleX(0.85);">1</span><span style="display:inline-block;width:6.9px;text-align:center;">-</span><span style="display:inline-block;width:7.95px;text-align:center;">2</span><span style="display:inline-block;width:7.95px;text-align:center;">0</span><span style="display:inline-block;width:5.6px;text-align:center;transform:scaleX(0.85);">1</span><span style="display:inline-block;width:7.95px;text-align:center;">0</span></div>
<div class="t" style="right:854px;top:105.60px;font-size:13px;line-height:13px;color:#383838;"><span style="display:inline-block;width:7.95px;text-align:center;">0</span><span style="display:inline-block;width:5.6px;text-align:center;transform:scaleX(0.85);">1</span><span style="display:inline-block;width:6.9px;text-align:center;">-</span><span style="display:inline-block;width:5.6px;text-align:center;transform:scaleX(0.85);">1</span><span style="display:inline-block;width:7.95px;text-align:center;">9</span><span style="display:inline-block;width:6.9px;text-align:center;">-</span><span style="display:inline-block;width:7.95px;text-align:center;">2</span><span style="display:inline-block;width:7.95px;text-align:center;">0</span><span style="display:inline-block;width:5.6px;text-align:center;transform:scaleX(0.85);">1</span><span style="display:inline-block;width:5.6px;text-align:center;transform:scaleX(0.85);">1</span></div>
<div class="t" style="right:706px;top:105.60px;font-size:13px;line-height:13px;color:#383838;"><span style="display:inline-block;width:7.95px;text-align:center;">5</span><span style="display:inline-block;width:7.95px;text-align:center;">6</span><span style="display:inline-block;width:3.8px;text-align:center;">.</span><span style="display:inline-block;width:7.95px;text-align:center;">0</span><span style="display:inline-block;width:7.95px;text-align:center;">0</span></div>
<div class="t" style="right:616px;top:105.60px;font-size:13px;line-height:13px;color:#383838;"><span style="display:inline-block;width:5.6px;text-align:center;transform:scaleX(0.85);">1</span><span style="display:inline-block;width:5.6px;text-align:center;transform:scaleX(0.85);">1</span><span style="display:inline-block;width:6.9px;text-align:center;">-</span><span style="display:inline-block;width:7.95px;text-align:center;">0</span><span style="display:inline-block;width:5.6px;text-align:center;transform:scaleX(0.85);">1</span><span style="display:inline-block;width:6.9px;text-align:center;">-</span><span style="display:inline-block;width:7.95px;text-align:center;">2</span><span style="display:inline-block;width:7.95px;text-align:center;">0</span><span style="display:inline-block;width:5.6px;text-align:center;transform:scaleX(0.85);">1</span><span style="display:inline-block;width:7.95px;text-align:center;">0</span></div>
<div class="t" style="right:526px;top:105.60px;font-size:13px;line-height:13px;color:#383838;"><span style="display:inline-block;width:7.95px;text-align:center;">0</span><span style="display:inline-block;width:5.6px;text-align:center;transform:scaleX(0.85);">1</span><span style="display:inline-block;width:6.9px;text-align:center;">-</span><span style="display:inline-block;width:5.6px;text-align:center;transform:scaleX(0.85);">1</span><span style="display:inline-block;width:7.95px;text-align:center;">9</span><span style="display:inline-block;width:6.9px;text-align:center;">-</span><span style="display:inline-block;width:7.95px;text-align:center;">2</span><span style="display:inline-block;width:7.95px;text-align:center;">0</span><span style="display:inline-block;width:5.6px;text-align:center;transform:scaleX(0.85);">1</span><span style="display:inline-block;width:5.6px;text-align:center;transform:scaleX(0.85);">1</span></div>
<div class="t" style="right:378px;top:105.60px;font-size:13px;line-height:13px;color:#383838;"><span style="display:inline-block;width:7.95px;text-align:center;">5</span><span style="display:inline-block;width:7.95px;text-align:center;">5</span><span style="display:inline-block;width:3.8px;text-align:center;">.</span><span style="display:inline-block;width:7.95px;text-align:center;">0</span><span style="display:inline-block;width:7.95px;text-align:center;">0</span></div>
<div class="t" style="right:230px;top:105.60px;font-size:13px;line-height:13px;color:#383838;"><span style="display:inline-block;width:7.95px;text-align:center;">0</span><span style="display:inline-block;width:3.8px;text-align:center;">.</span><span style="display:inline-block;width:7.95px;text-align:center;">0</span><span style="display:inline-block;width:7.95px;text-align:center;">0</span></div>
<div class="t" style="right:82px;top:105.60px;font-size:13px;line-height:13px;color:#383838;"><span style="display:inline-block;width:7.95px;text-align:center;">0</span><span style="display:inline-block;width:3.8px;text-align:center;">.</span><span style="display:inline-block;width:7.95px;text-align:center;">0</span><span style="display:inline-block;width:7.95px;text-align:center;">0</span></div>
<div class="t" style="right:1.7999999999999545px;top:105.60px;font-size:13px;line-height:13px;color:#383838;"><span style="display:inline-block;width:5.6px;text-align:center;transform:scaleX(0.85);">1</span><span style="display:inline-block;width:7.95px;text-align:center;">0</span><span style="display:inline-block;width:7.95px;text-align:center;">0</span><span style="display:inline-block;width:3.8px;text-align:center;">.</span><span style="display:inline-block;width:7.95px;text-align:center;">0</span><span style="display:inline-block;width:7.95px;text-align:center;">0</span><span style="display:inline-block;width:10.5px;text-align:center;">%</span></div>
<div class="t" style="right:1570px;top:149.60px;font-size:13px;line-height:13px;color:#383838;"><span style="display:inline-block;width:7.95px;text-align:center;">9</span><span style="display:inline-block;width:7.95px;text-align:center;">2</span><span style="display:inline-block;width:5.6px;text-align:center;transform:scaleX(0.85);">1</span><span style="display:inline-block;width:7.95px;text-align:center;">6</span><span style="display:inline-block;width:7.95px;text-align:center;">6</span></div>
<div class="t" style="right:1486px;top:149.60px;font-size:13px;line-height:13px;color:#383838;"><span style="display:inline-block;width:7.95px;text-align:center;">2</span><span style="display:inline-block;width:7.95px;text-align:center;">3</span><span style="display:inline-block;width:7.95px;text-align:center;">6</span><span style="display:inline-block;width:7.95px;text-align:center;">6</span><span style="display:inline-block;width:7.95px;text-align:center;">8</span></div>
<div class="b" style="left:204px;top:149.5px;width:13px;height:13px;background:#fff;border:1px solid #9a9a9a;border-radius:1px;"></div>
<div class="t" style="left:262px;top:149.60px;font-size:13px;line-height:13px;color:#383838;letter-spacing:0.05px;">EC1010</div>
<div class="t" style="left:363px;top:149.60px;font-size:13px;line-height:13px;color:#383838;letter-spacing:0.75px;">Start Office Building Addition Project</div>
<div class="t" style="right:944px;top:149.60px;font-size:13px;line-height:13px;color:#383838;"><span style="display:inline-block;width:5.6px;text-align:center;transform:scaleX(0.85);">1</span><span style="display:inline-block;width:5.6px;text-align:center;transform:scaleX(0.85);">1</span><span style="display:inline-block;width:6.9px;text-align:center;">-</span><span style="display:inline-block;width:7.95px;text-align:center;">0</span><span style="display:inline-block;width:5.6px;text-align:center;transform:scaleX(0.85);">1</span><span style="display:inline-block;width:6.9px;text-align:center;">-</span><span style="display:inline-block;width:7.95px;text-align:center;">2</span><span style="display:inline-block;width:7.95px;text-align:center;">0</span><span style="display:inline-block;width:5.6px;text-align:center;transform:scaleX(0.85);">1</span><span style="display:inline-block;width:7.95px;text-align:center;">0</span></div>
<div class="t" style="right:706px;top:149.60px;font-size:13px;line-height:13px;color:#383838;"><span style="display:inline-block;width:7.95px;text-align:center;">0</span><span style="display:inline-block;width:3.8px;text-align:center;">.</span><span style="display:inline-block;width:7.95px;text-align:center;">0</span><span style="display:inline-block;width:7.95px;text-align:center;">0</span></div>
<div class="t" style="right:616px;top:149.60px;font-size:13px;line-height:13px;color:#383838;"><span style="display:inline-block;width:5.6px;text-align:center;transform:scaleX(0.85);">1</span><span style="display:inline-block;width:5.6px;text-align:center;transform:scaleX(0.85);">1</span><span style="display:inline-block;width:6.9px;text-align:center;">-</span><span style="display:inline-block;width:7.95px;text-align:center;">0</span><span style="display:inline-block;width:5.6px;text-align:center;transform:scaleX(0.85);">1</span><span style="display:inline-block;width:6.9px;text-align:center;">-</span><span style="display:inline-block;width:7.95px;text-align:center;">2</span><span style="display:inline-block;width:7.95px;text-align:center;">0</span><span style="display:inline-block;width:5.6px;text-align:center;transform:scaleX(0.85);">1</span><span style="display:inline-block;width:7.95px;text-align:center;">0</span></div>
<div class="t" style="right:526px;top:149.60px;font-size:13px;line-height:13px;color:#383838;"><span style="display:inline-block;width:5.6px;text-align:center;transform:scaleX(0.85);">1</span><span style="display:inline-block;width:5.6px;text-align:center;transform:scaleX(0.85);">1</span><span style="display:inline-block;width:6.9px;text-align:center;">-</span><span style="display:inline-block;width:7.95px;text-align:center;">0</span><span style="display:inline-block;width:5.6px;text-align:center;transform:scaleX(0.85);">1</span><span style="display:inline-block;width:6.9px;text-align:center;">-</span><span style="display:inline-block;width:7.95px;text-align:center;">2</span><span style="display:inline-block;width:7.95px;text-align:center;">0</span><span style="display:inline-block;width:5.6px;text-align:center;transform:scaleX(0.85);">1</span><span style="display:inline-block;width:7.95px;text-align:center;">0</span></div>
<div class="t" style="right:378px;top:149.60px;font-size:13px;line-height:13px;color:#383838;"><span style="display:inline-block;width:7.95px;text-align:center;">0</span><span style="display:inline-block;width:3.8px;text-align:center;">.</span><span style="display:inline-block;width:7.95px;text-align:center;">0</span><span style="display:inline-block;width:7.95px;text-align:center;">0</span></div>
<div class="t" style="right:230px;top:149.60px;font-size:13px;line-height:13px;color:#383838;"><span style="display:inline-block;width:7.95px;text-align:center;">0</span><span style="display:inline-block;width:3.8px;text-align:center;">.</span><span style="display:inline-block;width:7.95px;text-align:center;">0</span><span style="display:inline-block;width:7.95px;text-align:center;">0</span></div>
<div class="t" style="right:82px;top:149.60px;font-size:13px;line-height:13px;color:#383838;"><span style="display:inline-block;width:7.95px;text-align:center;">0</span><span style="display:inline-block;width:3.8px;text-align:center;">.</span><span style="display:inline-block;width:7.95px;text-align:center;">0</span><span style="display:inline-block;width:7.95px;text-align:center;">0</span></div>
<div class="t" style="right:1.7999999999999545px;top:149.60px;font-size:13px;line-height:13px;color:#383838;"><span style="display:inline-block;width:7.95px;text-align:center;">0</span><span style="display:inline-block;width:3.8px;text-align:center;">.</span><span style="display:inline-block;width:7.95px;text-align:center;">0</span><span style="display:inline-block;width:7.95px;text-align:center;">0</span><span style="display:inline-block;width:10.5px;text-align:center;">%</span></div>
<div class="t" style="right:1570px;top:193.60px;font-size:13px;line-height:13px;color:#383838;"><span style="display:inline-block;width:7.95px;text-align:center;">9</span><span style="display:inline-block;width:7.95px;text-align:center;">2</span><span style="display:inline-block;width:5.6px;text-align:center;transform:scaleX(0.85);">1</span><span style="display:inline-block;width:5.6px;text-align:center;transform:scaleX(0.85);">1</span><span style="display:inline-block;width:7.95px;text-align:center;">0</span></div>
<div class="t" style="right:1486px;top:193.60px;font-size:13px;line-height:13px;color:#383838;"><span style="display:inline-block;width:7.95px;text-align:center;">2</span><span style="display:inline-block;width:7.95px;text-align:center;">3</span><span style="display:inline-block;width:7.95px;text-align:center;">6</span><span style="display:inline-block;width:7.95px;text-align:center;">6</span><span style="display:inline-block;width:7.95px;text-align:center;">8</span></div>
<div class="b" style="left:204px;top:193.5px;width:13px;height:13px;background:#fff;border:1px solid #9a9a9a;border-radius:1px;"></div>
<div class="t" style="left:262px;top:193.60px;font-size:13px;line-height:13px;color:#383838;letter-spacing:0.05px;">EC1030</div>
<div class="t" style="left:363px;top:193.60px;font-size:13px;line-height:13px;color:#383838;letter-spacing:0.75px;">Review and Approve Designs</div>
<div class="t" style="right:944px;top:193.60px;font-size:13px;line-height:13px;color:#383838;"><span style="display:inline-block;width:7.95px;text-align:center;">0</span><span style="display:inline-block;width:5.6px;text-align:center;transform:scaleX(0.85);">1</span><span style="display:inline-block;width:6.9px;text-align:center;">-</span><span style="display:inline-block;width:5.6px;text-align:center;transform:scaleX(0.85);">1</span><span style="display:inline-block;width:7.95px;text-align:center;">7</span><span style="display:inline-block;width:6.9px;text-align:center;">-</span><span style="display:inline-block;width:7.95px;text-align:center;">2</span><span style="display:inline-block;width:7.95px;text-align:center;">0</span><span style="display:inline-block;width:5.6px;text-align:center;transform:scaleX(0.85);">1</span><span style="display:inline-block;width:5.6px;text-align:center;transform:scaleX(0.85);">1</span></div>
<div class="t" style="right:854px;top:193.60px;font-size:13px;line-height:13px;color:#383838;"><span style="display:inline-block;width:7.95px;text-align:center;">0</span><span style="display:inline-block;width:7.95px;text-align:center;">2</span><span style="display:inline-block;width:6.9px;text-align:center;">-</span><span style="display:inline-block;width:5.6px;text-align:center;transform:scaleX(0.85);">1</span><span style="display:inline-block;width:7.95px;text-align:center;">7</span><span style="display:inline-block;width:6.9px;text-align:center;">-</span><span style="display:inline-block;width:7.95px;text-align:center;">2</span><span style="display:inline-block;width:7.95px;text-align:center;">0</span><span style="display:inline-block;width:5.6px;text-align:center;transform:scaleX(0.85);">1</span><span style="display:inline-block;width:5.6px;text-align:center;transform:scaleX(0.85);">1</span></div>
<div class="t" style="right:706px;top:193.60px;font-size:13px;line-height:13px;color:#383838;"><span style="display:inline-block;width:7.95px;text-align:center;">2</span><span style="display:inline-block;width:7.95px;text-align:center;">2</span><span style="display:inline-block;width:3.8px;text-align:center;">.</span><span style="display:inline-block;width:7.95px;text-align:center;">0</span><span style="display:inline-block;width:7.95px;text-align:center;">0</span></div>
<div class="t" style="right:616px;top:193.60px;font-size:13px;line-height:13px;color:#383838;"><span style="display:inline-block;width:7.95px;text-align:center;">0</span><span style="display:inline-block;width:5.6px;text-align:center;transform:scaleX(0.85);">1</span><span style="display:inline-block;width:6.9px;text-align:center;">-</span><span style="display:inline-block;width:5.6px;text-align:center;transform:scaleX(0.85);">1</span><span style="display:inline-block;width:7.95px;text-align:center;">7</span><span style="display:inline-block;width:6.9px;text-align:center;">-</span><span style="display:inline-block;width:7.95px;text-align:center;">2</span><span style="display:inline-block;width:7.95px;text-align:center;">0</span><span style="display:inline-block;width:5.6px;text-align:center;transform:scaleX(0.85);">1</span><span style="display:inline-block;width:5.6px;text-align:center;transform:scaleX(0.85);">1</span></div>
<div class="t" style="right:526px;top:193.60px;font-size:13px;line-height:13px;color:#383838;"><span style="display:inline-block;width:7.95px;text-align:center;">0</span><span style="display:inline-block;width:7.95px;text-align:center;">2</span><span style="display:inline-block;width:6.9px;text-align:center;">-</span><span style="display:inline-block;width:5.6px;text-align:center;transform:scaleX(0.85);">1</span><span style="display:inline-block;width:7.95px;text-align:center;">7</span><span style="display:inline-block;width:6.9px;text-align:center;">-</span><span style="display:inline-block;width:7.95px;text-align:center;">2</span><span style="display:inline-block;width:7.95px;text-align:center;">0</span><span style="display:inline-block;width:5.6px;text-align:center;transform:scaleX(0.85);">1</span><span style="display:inline-block;width:5.6px;text-align:center;transform:scaleX(0.85);">1</span></div>
<div class="t" style="right:378px;top:193.60px;font-size:13px;line-height:13px;color:#383838;"><span style="display:inline-block;width:7.95px;text-align:center;">2</span><span style="display:inline-block;width:7.95px;text-align:center;">4</span><span style="display:inline-block;width:3.8px;text-align:center;">.</span><span style="display:inline-block;width:7.95px;text-align:center;">0</span><span style="display:inline-block;width:7.95px;text-align:center;">0</span></div>
<div class="t" style="right:230px;top:193.60px;font-size:13px;line-height:13px;color:#383838;"><span style="display:inline-block;width:7.95px;text-align:center;">0</span><span style="display:inline-block;width:3.8px;text-align:center;">.</span><span style="display:inline-block;width:7.95px;text-align:center;">0</span><span style="display:inline-block;width:7.95px;text-align:center;">0</span></div>
<div class="t" style="right:82px;top:193.60px;font-size:13px;line-height:13px;color:#383838;"><span style="display:inline-block;width:7.95px;text-align:center;">0</span><span style="display:inline-block;width:3.8px;text-align:center;">.</span><span style="display:inline-block;width:7.95px;text-align:center;">0</span><span style="display:inline-block;width:7.95px;text-align:center;">0</span></div>
<div class="t" style="right:1.7999999999999545px;top:193.60px;font-size:13px;line-height:13px;color:#383838;"><span style="display:inline-block;width:5.6px;text-align:center;transform:scaleX(0.85);">1</span><span style="display:inline-block;width:7.95px;text-align:center;">0</span><span style="display:inline-block;width:7.95px;text-align:center;">0</span><span style="display:inline-block;width:3.8px;text-align:center;">.</span><span style="display:inline-block;width:7.95px;text-align:center;">0</span><span style="display:inline-block;width:7.95px;text-align:center;">0</span><span style="display:inline-block;width:10.5px;text-align:center;">%</span></div>
<div class="t" style="right:1570px;top:246.60px;font-size:13px;line-height:13px;color:#383838;"><span style="display:inline-block;width:7.95px;text-align:center;">9</span><span style="display:inline-block;width:7.95px;text-align:center;">2</span><span style="display:inline-block;width:5.6px;text-align:center;transform:scaleX(0.85);">1</span><span style="display:inline-block;width:7.95px;text-align:center;">0</span><span style="display:inline-block;width:7.95px;text-align:center;">6</span></div>
<div class="t" style="right:1486px;top:246.60px;font-size:13px;line-height:13px;color:#383838;"><span style="display:inline-block;width:7.95px;text-align:center;">2</span><span style="display:inline-block;width:7.95px;text-align:center;">3</span><span style="display:inline-block;width:7.95px;text-align:center;">6</span><span style="display:inline-block;width:7.95px;text-align:center;">8</span><span style="display:inline-block;width:7.95px;text-align:center;">0</span></div>
<div class="b" style="left:204px;top:246.5px;width:13px;height:13px;background:#fff;border:1px solid #9a9a9a;border-radius:1px;"></div>
<div class="t" style="left:262px;top:246.60px;font-size:13px;line-height:13px;color:#383838;letter-spacing:0.05px;">EC1040</div>
<div class="t" style="left:363px;top:246.60px;font-size:13px;line-height:13px;color:#383838;letter-spacing:0.75px;">Assemble Brick Samples</div>
<div class="t" style="right:944px;top:246.60px;font-size:13px;line-height:13px;color:#383838;"><span style="display:inline-block;width:7.95px;text-align:center;">0</span><span style="display:inline-block;width:7.95px;text-align:center;">2</span><span style="display:inline-block;width:6.9px;text-align:center;">-</span><span style="display:inline-block;width:5.6px;text-align:center;transform:scaleX(0.85);">1</span><span style="display:inline-block;width:7.95px;text-align:center;">7</span><span style="display:inline-block;width:6.9px;text-align:center;">-</span><span style="display:inline-block;width:7.95px;text-align:center;">2</span><span style="display:inline-block;width:7.95px;text-align:center;">0</span><span style="display:inline-block;width:5.6px;text-align:center;transform:scaleX(0.85);">1</span><span style="display:inline-block;width:5.6px;text-align:center;transform:scaleX(0.85);">1</span></div>
<div class="t" style="right:706px;top:246.60px;font-size:13px;line-height:13px;color:#383838;"><span style="display:inline-block;width:7.95px;text-align:center;">0</span><span style="display:inline-block;width:3.8px;text-align:center;">.</span><span style="display:inline-block;width:7.95px;text-align:center;">0</span><span style="display:inline-block;width:7.95px;text-align:center;">0</span></div>
<div class="t" style="right:616px;top:246.60px;font-size:13px;line-height:13px;color:#383838;"><span style="display:inline-block;width:7.95px;text-align:center;">0</span><span style="display:inline-block;width:7.95px;text-align:center;">2</span><span style="display:inline-block;width:6.9px;text-align:center;">-</span><span style="display:inline-block;width:5.6px;text-align:center;transform:scaleX(0.85);">1</span><span style="display:inline-block;width:7.95px;text-align:center;">7</span><span style="display:inline-block;width:6.9px;text-align:center;">-</span><span style="display:inline-block;width:7.95px;text-align:center;">2</span><span style="display:inline-block;width:7.95px;text-align:center;">0</span><span style="display:inline-block;width:5.6px;text-align:center;transform:scaleX(0.85);">1</span><span style="display:inline-block;width:5.6px;text-align:center;transform:scaleX(0.85);">1</span></div>
<div class="t" style="right:526px;top:246.60px;font-size:13px;line-height:13px;color:#383838;"><span style="display:inline-block;width:7.95px;text-align:center;">0</span><span style="display:inline-block;width:7.95px;text-align:center;">2</span><span style="display:inline-block;width:6.9px;text-align:center;">-</span><span style="display:inline-block;width:5.6px;text-align:center;transform:scaleX(0.85);">1</span><span style="display:inline-block;width:7.95px;text-align:center;">7</span><span style="display:inline-block;width:6.9px;text-align:center;">-</span><span style="display:inline-block;width:7.95px;text-align:center;">2</span><span style="display:inline-block;width:7.95px;text-align:center;">0</span><span style="display:inline-block;width:5.6px;text-align:center;transform:scaleX(0.85);">1</span><span style="display:inline-block;width:5.6px;text-align:center;transform:scaleX(0.85);">1</span></div>
<div class="t" style="right:378px;top:246.60px;font-size:13px;line-height:13px;color:#383838;"><span style="display:inline-block;width:7.95px;text-align:center;">0</span><span style="display:inline-block;width:3.8px;text-align:center;">.</span><span style="display:inline-block;width:7.95px;text-align:center;">0</span><span style="display:inline-block;width:7.95px;text-align:center;">0</span></div>
<div class="t" style="right:230px;top:246.60px;font-size:13px;line-height:13px;color:#383838;"><span style="display:inline-block;width:7.95px;text-align:center;">0</span><span style="display:inline-block;width:3.8px;text-align:center;">.</span><span style="display:inline-block;width:7.95px;text-align:center;">0</span><span style="display:inline-block;width:7.95px;text-align:center;">0</span></div>
<div class="t" style="right:82px;top:246.60px;font-size:13px;line-height:13px;color:#383838;"><span style="display:inline-block;width:7.95px;text-align:center;">0</span><span style="display:inline-block;width:3.8px;text-align:center;">.</span><span style="display:inline-block;width:7.95px;text-align:center;">0</span><span style="display:inline-block;width:7.95px;text-align:center;">0</span></div>
<div class="t" style="right:1.7999999999999545px;top:246.60px;font-size:13px;line-height:13px;color:#383838;"><span style="display:inline-block;width:7.95px;text-align:center;">0</span><span style="display:inline-block;width:3.8px;text-align:center;">.</span><span style="display:inline-block;width:7.95px;text-align:center;">0</span><span style="display:inline-block;width:7.95px;text-align:center;">0</span><span style="display:inline-block;width:10.5px;text-align:center;">%</span></div>
<div class="t" style="right:1570px;top:299.60px;font-size:13px;line-height:13px;color:#383838;"><span style="display:inline-block;width:7.95px;text-align:center;">9</span><span style="display:inline-block;width:7.95px;text-align:center;">2</span><span style="display:inline-block;width:5.6px;text-align:center;transform:scaleX(0.85);">1</span><span style="display:inline-block;width:7.95px;text-align:center;">0</span><span style="display:inline-block;width:7.95px;text-align:center;">7</span></div>
<div class="t" style="right:1486px;top:299.60px;font-size:13px;line-height:13px;color:#383838;"><span style="display:inline-block;width:7.95px;text-align:center;">2</span><span style="display:inline-block;width:7.95px;text-align:center;">3</span><span style="display:inline-block;width:7.95px;text-align:center;">6</span><span style="display:inline-block;width:7.95px;text-align:center;">6</span><span style="display:inline-block;width:7.95px;text-align:center;">8</span></div>
<div class="b" style="left:204px;top:299.5px;width:13px;height:13px;background:#fff;border:1px solid #9a9a9a;border-radius:1px;"></div>
<div class="t" style="left:262px;top:299.60px;font-size:13px;line-height:13px;color:#383838;letter-spacing:0.05px;">EC1050</div>
<div class="t" style="left:363px;top:290.40px;font-size:13px;line-height:13px;color:#383838;letter-spacing:0.75px;">Assemble Technical Data for Heat</div>
<div class="t" style="left:363px;top:308.40px;font-size:13px;line-height:13px;color:#383838;letter-spacing:0.75px;">Pump</div>
<div class="t" style="right:941px;top:290.40px;font-size:13px;line-height:13px;color:#383838;"><span style="display:inline-block;width:7.95px;text-align:center;">0</span><span style="display:inline-block;width:7.95px;text-align:center;">2</span><span style="display:inline-block;width:6.9px;text-align:center;">-</span><span style="display:inline-block;width:5.6px;text-align:center;transform:scaleX(0.85);">1</span><span style="display:inline-block;width:7.95px;text-align:center;">6</span><span style="display:inline-block;width:6.9px;text-align:center;">-</span></div>
<div class="t" style="right:944px;top:308.40px;font-size:13px;line-height:13px;color:#383838;"><span style="display:inline-block;width:7.95px;text-align:center;">2</span><span style="display:inline-block;width:7.95px;text-align:center;">0</span><span style="display:inline-block;width:5.6px;text-align:center;transform:scaleX(0.85);">1</span><span style="display:inline-block;width:5.6px;text-align:center;transform:scaleX(0.85);">1</span></div>
<div class="t" style="right:851px;top:290.40px;font-size:13px;line-height:13px;color:#383838;"><span style="display:inline-block;width:7.95px;text-align:center;">0</span><span style="display:inline-block;width:7.95px;text-align:center;">2</span><span style="display:inline-block;width:6.9px;text-align:center;">-</span><span style="display:inline-block;width:7.95px;text-align:center;">2</span><span style="display:inline-block;width:7.95px;text-align:center;">5</span><span style="display:inline-block;width:6.9px;text-align:center;">-</span></div>
<div class="t" style="right:854px;top:308.40px;font-size:13px;line-height:13px;color:#383838;"><span style="display:inline-block;width:7.95px;text-align:center;">2</span><span style="display:inline-block;width:7.95px;text-align:center;">0</span><span style="display:inline-block;width:5.6px;text-align:center;transform:scaleX(0.85);">1</span><span style="display:inline-block;width:5.6px;text-align:center;transform:scaleX(0.85);">1</span></div>
<div class="t" style="right:706px;top:299.60px;font-size:13px;line-height:13px;color:#383838;"><span style="display:inline-block;width:7.95px;text-align:center;">8</span><span style="display:inline-block;width:3.8px;text-align:center;">.</span><span style="display:inline-block;width:7.95px;text-align:center;">0</span><span style="display:inline-block;width:7.95px;text-align:center;">0</span></div>
<div class="t" style="right:613px;top:290.40px;font-size:13px;line-height:13px;color:#383838;"><span style="display:inline-block;width:7.95px;text-align:center;">0</span><span style="display:inline-block;width:7.95px;text-align:center;">2</span><span style="display:inline-block;width:6.9px;text-align:center;">-</span><span style="display:inline-block;width:5.6px;text-align:center;transform:scaleX(0.85);">1</span><span style="display:inline-block;width:7.95px;text-align:center;">6</span><span style="display:inline-block;width:6.9px;text-align:center;">-</span></div>
<div class="t" style="right:616px;top:308.40px;font-size:13px;line-height:13px;color:#383838;"><span style="display:inline-block;width:7.95px;text-align:center;">2</span><span style="display:inline-block;width:7.95px;text-align:center;">0</span><span style="display:inline-block;width:5.6px;text-align:center;transform:scaleX(0.85);">1</span><span style="display:inline-block;width:5.6px;text-align:center;transform:scaleX(0.85);">1</span></div>
<div class="t" style="right:523px;top:290.40px;font-size:13px;line-height:13px;color:#383838;"><span style="display:inline-block;width:7.95px;text-align:center;">0</span><span style="display:inline-block;width:7.95px;text-align:center;">2</span><span style="display:inline-block;width:6.9px;text-align:center;">-</span><span style="display:inline-block;width:7.95px;text-align:center;">2</span><span style="display:inline-block;width:7.95px;text-align:center;">5</span><span style="display:inline-block;width:6.9px;text-align:center;">-</span></div>
<div class="t" style="right:526px;top:308.40px;font-size:13px;line-height:13px;color:#383838;"><span style="display:inline-block;width:7.95px;text-align:center;">2</span><span style="display:inline-block;width:7.95px;text-align:center;">0</span><span style="display:inline-block;width:5.6px;text-align:center;transform:scaleX(0.85);">1</span><span style="display:inline-block;width:5.6px;text-align:center;transform:scaleX(0.85);">1</span></div>
<div class="t" style="right:378px;top:299.60px;font-size:13px;line-height:13px;color:#383838;"><span style="display:inline-block;width:7.95px;text-align:center;">8</span><span style="display:inline-block;width:3.8px;text-align:center;">.</span><span style="display:inline-block;width:7.95px;text-align:center;">0</span><span style="display:inline-block;width:7.95px;text-align:center;">0</span></div>
<div class="t" style="right:230px;top:299.60px;font-size:13px;line-height:13px;color:#383838;"><span style="display:inline-block;width:7.95px;text-align:center;">0</span><span style="display:inline-block;width:3.8px;text-align:center;">.</span><span style="display:inline-block;width:7.95px;text-align:center;">0</span><span style="display:inline-block;width:7.95px;text-align:center;">0</span></div>
<div class="t" style="right:82px;top:299.60px;font-size:13px;line-height:13px;color:#383838;"><span style="display:inline-block;width:7.95px;text-align:center;">0</span><span style="display:inline-block;width:3.8px;text-align:center;">.</span><span style="display:inline-block;width:7.95px;text-align:center;">0</span><span style="display:inline-block;width:7.95px;text-align:center;">0</span></div>
<div class="t" style="right:1.7999999999999545px;top:299.60px;font-size:13px;line-height:13px;color:#383838;"><span style="display:inline-block;width:5.6px;text-align:center;transform:scaleX(0.85);">1</span><span style="display:inline-block;width:7.95px;text-align:center;">0</span><span style="display:inline-block;width:7.95px;text-align:center;">0</span><span style="display:inline-block;width:3.8px;text-align:center;">.</span><span style="display:inline-block;width:7.95px;text-align:center;">0</span><span style="display:inline-block;width:7.95px;text-align:center;">0</span><span style="display:inline-block;width:10.5px;text-align:center;">%</span></div>
<div class="t" style="right:1570px;top:352.60px;font-size:13px;line-height:13px;color:#383838;"><span style="display:inline-block;width:7.95px;text-align:center;">9</span><span style="display:inline-block;width:7.95px;text-align:center;">2</span><span style="display:inline-block;width:5.6px;text-align:center;transform:scaleX(0.85);">1</span><span style="display:inline-block;width:7.95px;text-align:center;">0</span><span style="display:inline-block;width:7.95px;text-align:center;">9</span></div>
<div class="t" style="right:1486px;top:352.60px;font-size:13px;line-height:13px;color:#383838;"><span style="display:inline-block;width:7.95px;text-align:center;">2</span><span style="display:inline-block;width:7.95px;text-align:center;">3</span><span style="display:inline-block;width:7.95px;text-align:center;">6</span><span style="display:inline-block;width:7.95px;text-align:center;">7</span><span style="display:inline-block;width:7.95px;text-align:center;">3</span></div>
<div class="b" style="left:204px;top:352.5px;width:13px;height:13px;background:#fff;border:1px solid #9a9a9a;border-radius:1px;"></div>
<div class="t" style="left:262px;top:352.60px;font-size:13px;line-height:13px;color:#383838;letter-spacing:0.05px;">EC1060</div>
<div class="t" style="left:363px;top:343.40px;font-size:13px;line-height:13px;color:#383838;letter-spacing:0.75px;">Assemble and Submit Flooring</div>
<div class="t" style="left:363px;top:361.40px;font-size:13px;line-height:13px;color:#383838;letter-spacing:0.75px;">Samples</div>
<div class="t" style="right:941px;top:343.40px;font-size:13px;line-height:13px;color:#383838;"><span style="display:inline-block;width:7.95px;text-align:center;">0</span><span style="display:inline-block;width:7.95px;text-align:center;">2</span><span style="display:inline-block;width:6.9px;text-align:center;">-</span><span style="display:inline-block;width:7.95px;text-align:center;">2</span><span style="display:inline-block;width:7.95px;text-align:center;">5</span><span style="display:inline-block;width:6.9px;text-align:center;">-</span></div>
<div class="t" style="right:944px;top:361.40px;font-size:13px;line-height:13px;color:#383838;"><span style="display:inline-block;width:7.95px;text-align:center;">2</span><span style="display:inline-block;width:7.95px;text-align:center;">0</span><span style="display:inline-block;width:5.6px;text-align:center;transform:scaleX(0.85);">1</span><span style="display:inline-block;width:5.6px;text-align:center;transform:scaleX(0.85);">1</span></div>
<div class="t" style="right:706px;top:352.60px;font-size:13px;line-height:13px;color:#383838;"><span style="display:inline-block;width:7.95px;text-align:center;">0</span><span style="display:inline-block;width:3.8px;text-align:center;">.</span><span style="display:inline-block;width:7.95px;text-align:center;">0</span><span style="display:inline-block;width:7.95px;text-align:center;">0</span></div>
<div class="t" style="right:613px;top:343.40px;font-size:13px;line-height:13px;color:#383838;"><span style="display:inline-block;width:7.95px;text-align:center;">0</span><span style="display:inline-block;width:7.95px;text-align:center;">2</span><span style="display:inline-block;width:6.9px;text-align:center;">-</span><span style="display:inline-block;width:7.95px;text-align:center;">2</span><span style="display:inline-block;width:7.95px;text-align:center;">5</span><span style="display:inline-block;width:6.9px;text-align:center;">-</span></div>
<div class="t" style="right:616px;top:361.40px;font-size:13px;line-height:13px;color:#383838;"><span style="display:inline-block;width:7.95px;text-align:center;">2</span><span style="display:inline-block;width:7.95px;text-align:center;">0</span><span style="display:inline-block;width:5.6px;text-align:center;transform:scaleX(0.85);">1</span><span style="display:inline-block;width:5.6px;text-align:center;transform:scaleX(0.85);">1</span></div>
<div class="t" style="right:523px;top:343.40px;font-size:13px;line-height:13px;color:#383838;"><span style="display:inline-block;width:7.95px;text-align:center;">0</span><span style="display:inline-block;width:7.95px;text-align:center;">2</span><span style="display:inline-block;width:6.9px;text-align:center;">-</span><span style="display:inline-block;width:7.95px;text-align:center;">2</span><span style="display:inline-block;width:7.95px;text-align:center;">5</span><span style="display:inline-block;width:6.9px;text-align:center;">-</span></div>
<div class="t" style="right:526px;top:361.40px;font-size:13px;line-height:13px;color:#383838;"><span style="display:inline-block;width:7.95px;text-align:center;">2</span><span style="display:inline-block;width:7.95px;text-align:center;">0</span><span style="display:inline-block;width:5.6px;text-align:center;transform:scaleX(0.85);">1</span><span style="display:inline-block;width:5.6px;text-align:center;transform:scaleX(0.85);">1</span></div>
<div class="t" style="right:378px;top:352.60px;font-size:13px;line-height:13px;color:#383838;"><span style="display:inline-block;width:7.95px;text-align:center;">0</span><span style="display:inline-block;width:3.8px;text-align:center;">.</span><span style="display:inline-block;width:7.95px;text-align:center;">0</span><span style="display:inline-block;width:7.95px;text-align:center;">0</span></div>
<div class="t" style="right:230px;top:352.60px;font-size:13px;line-height:13px;color:#383838;"><span style="display:inline-block;width:7.95px;text-align:center;">0</span><span style="display:inline-block;width:3.8px;text-align:center;">.</span><span style="display:inline-block;width:7.95px;text-align:center;">0</span><span style="display:inline-block;width:7.95px;text-align:center;">0</span></div>
<div class="t" style="right:82px;top:352.60px;font-size:13px;line-height:13px;color:#383838;"><span style="display:inline-block;width:7.95px;text-align:center;">0</span><span style="display:inline-block;width:3.8px;text-align:center;">.</span><span style="display:inline-block;width:7.95px;text-align:center;">0</span><span style="display:inline-block;width:7.95px;text-align:center;">0</span></div>
<div class="t" style="right:1.7999999999999545px;top:352.60px;font-size:13px;line-height:13px;color:#383838;"><span style="display:inline-block;width:7.95px;text-align:center;">0</span><span style="display:inline-block;width:3.8px;text-align:center;">.</span><span style="display:inline-block;width:7.95px;text-align:center;">0</span><span style="display:inline-block;width:7.95px;text-align:center;">0</span><span style="display:inline-block;width:10.5px;text-align:center;">%</span></div>
<div class="t" style="right:1570px;top:414.60px;font-size:13px;line-height:13px;color:#383838;"><span style="display:inline-block;width:7.95px;text-align:center;">9</span><span style="display:inline-block;width:7.95px;text-align:center;">2</span><span style="display:inline-block;width:5.6px;text-align:center;transform:scaleX(0.85);">1</span><span style="display:inline-block;width:5.6px;text-align:center;transform:scaleX(0.85);">1</span><span style="display:inline-block;width:5.6px;text-align:center;transform:scaleX(0.85);">1</span></div>
<div class="t" style="right:1486px;top:414.60px;font-size:13px;line-height:13px;color:#383838;"><span style="display:inline-block;width:7.95px;text-align:center;">2</span><span style="display:inline-block;width:7.95px;text-align:center;">3</span><span style="display:inline-block;width:7.95px;text-align:center;">6</span><span style="display:inline-block;width:7.95px;text-align:center;">8</span><span style="display:inline-block;width:7.95px;text-align:center;">0</span></div>
<div class="b" style="left:204px;top:414.5px;width:13px;height:13px;background:#fff;border:1px solid #9a9a9a;border-radius:1px;"></div>
<div class="t" style="left:262px;top:414.60px;font-size:13px;line-height:13px;color:#383838;letter-spacing:0.05px;">EC1070</div>
<div class="t" style="left:363px;top:414.60px;font-size:13px;line-height:13px;color:#383838;letter-spacing:0.75px;">Review and Approve Brick Samples</div>
<div class="t" style="right:941px;top:405.40px;font-size:13px;line-height:13px;color:#383838;"><span style="display:inline-block;width:7.95px;text-align:center;">0</span><span style="display:inline-block;width:7.95px;text-align:center;">2</span><span style="display:inline-block;width:6.9px;text-align:center;">-</span><span style="display:inline-block;width:7.95px;text-align:center;">2</span><span style="display:inline-block;width:7.95px;text-align:center;">8</span><span style="display:inline-block;width:6.9px;text-align:center;">-</span></div>
<div class="t" style="right:944px;top:423.40px;font-size:13px;line-height:13px;color:#383838;"><span style="display:inline-block;width:7.95px;text-align:center;">2</span><span style="display:inline-block;width:7.95px;text-align:center;">0</span><span style="display:inline-block;width:5.6px;text-align:center;transform:scaleX(0.85);">1</span><span style="display:inline-block;width:5.6px;text-align:center;transform:scaleX(0.85);">1</span></div>
<div class="t" style="right:851px;top:405.40px;font-size:13px;line-height:13px;color:#383838;"><span style="display:inline-block;width:7.95px;text-align:center;">0</span><span style="display:inline-block;width:7.95px;text-align:center;">4</span><span style="display:inline-block;width:6.9px;text-align:center;">-</span><span style="display:inline-block;width:5.6px;text-align:center;transform:scaleX(0.85);">1</span><span style="display:inline-block;width:7.95px;text-align:center;">3</span><span style="display:inline-block;width:6.9px;text-align:center;">-</span></div>
<div class="t" style="right:854px;top:423.40px;font-size:13px;line-height:13px;color:#383838;"><span style="display:inline-block;width:7.95px;text-align:center;">2</span><span style="display:inline-block;width:7.95px;text-align:center;">0</span><span style="display:inline-block;width:5.6px;text-align:center;transform:scaleX(0.85);">1</span><span style="display:inline-block;width:5.6px;text-align:center;transform:scaleX(0.85);">1</span></div>
<div class="t" style="right:706px;top:414.60px;font-size:13px;line-height:13px;color:#383838;"><span style="display:inline-block;width:7.95px;text-align:center;">3</span><span style="display:inline-block;width:7.95px;text-align:center;">0</span><span style="display:inline-block;width:3.8px;text-align:center;">.</span><span style="display:inline-block;width:7.95px;text-align:center;">0</span><span style="display:inline-block;width:7.95px;text-align:center;">0</span></div>
<div class="t" style="right:613px;top:405.40px;font-size:13px;line-height:13px;color:#383838;"><span style="display:inline-block;width:7.95px;text-align:center;">0</span><span style="display:inline-block;width:7.95px;text-align:center;">2</span><span style="display:inline-block;width:6.9px;text-align:center;">-</span><span style="display:inline-block;width:7.95px;text-align:center;">2</span><span style="display:inline-block;width:7.95px;text-align:center;">8</span><span style="display:inline-block;width:6.9px;text-align:center;">-</span></div>
<div class="t" style="right:616px;top:423.40px;font-size:13px;line-height:13px;color:#383838;"><span style="display:inline-block;width:7.95px;text-align:center;">2</span><span style="display:inline-block;width:7.95px;text-align:center;">0</span><span style="display:inline-block;width:5.6px;text-align:center;transform:scaleX(0.85);">1</span><span style="display:inline-block;width:5.6px;text-align:center;transform:scaleX(0.85);">1</span></div>
<div class="t" style="right:523px;top:405.40px;font-size:13px;line-height:13px;color:#383838;"><span style="display:inline-block;width:7.95px;text-align:center;">0</span><span style="display:inline-block;width:7.95px;text-align:center;">4</span><span style="display:inline-block;width:6.9px;text-align:center;">-</span><span style="display:inline-block;width:5.6px;text-align:center;transform:scaleX(0.85);">1</span><span style="display:inline-block;width:7.95px;text-align:center;">3</span><span style="display:inline-block;width:6.9px;text-align:center;">-</span></div>
<div class="t" style="right:526px;top:423.40px;font-size:13px;line-height:13px;color:#383838;"><span style="display:inline-block;width:7.95px;text-align:center;">2</span><span style="display:inline-block;width:7.95px;text-align:center;">0</span><span style="display:inline-block;width:5.6px;text-align:center;transform:scaleX(0.85);">1</span><span style="display:inline-block;width:5.6px;text-align:center;transform:scaleX(0.85);">1</span></div>
<div class="t" style="right:378px;top:414.60px;font-size:13px;line-height:13px;color:#383838;"><span style="display:inline-block;width:7.95px;text-align:center;">3</span><span style="display:inline-block;width:7.95px;text-align:center;">2</span><span style="display:inline-block;width:3.8px;text-align:center;">.</span><span style="display:inline-block;width:7.95px;text-align:center;">0</span><span style="display:inline-block;width:7.95px;text-align:center;">0</span></div>
<div class="t" style="right:230px;top:414.60px;font-size:13px;line-height:13px;color:#383838;"><span style="display:inline-block;width:7.95px;text-align:center;">0</span><span style="display:inline-block;width:3.8px;text-align:center;">.</span><span style="display:inline-block;width:7.95px;text-align:center;">0</span><span style="display:inline-block;width:7.95px;text-align:center;">0</span></div>
<div class="t" style="right:82px;top:414.60px;font-size:13px;line-height:13px;color:#383838;"><span style="display:inline-block;width:7.95px;text-align:center;">0</span><span style="display:inline-block;width:3.8px;text-align:center;">.</span><span style="display:inline-block;width:7.95px;text-align:center;">0</span><span style="display:inline-block;width:7.95px;text-align:center;">0</span></div>
<div class="t" style="right:1.7999999999999545px;top:414.60px;font-size:13px;line-height:13px;color:#383838;"><span style="display:inline-block;width:5.6px;text-align:center;transform:scaleX(0.85);">1</span><span style="display:inline-block;width:7.95px;text-align:center;">0</span><span style="display:inline-block;width:7.95px;text-align:center;">0</span><span style="display:inline-block;width:3.8px;text-align:center;">.</span><span style="display:inline-block;width:7.95px;text-align:center;">0</span><span style="display:inline-block;width:7.95px;text-align:center;">0</span><span style="display:inline-block;width:10.5px;text-align:center;">%</span></div>
<div class="t" style="right:1570px;top:458.60px;font-size:13px;line-height:13px;color:#383838;"><span style="display:inline-block;width:7.95px;text-align:center;">9</span><span style="display:inline-block;width:7.95px;text-align:center;">5</span><span style="display:inline-block;width:7.95px;text-align:center;">4</span><span style="display:inline-block;width:7.95px;text-align:center;">8</span><span style="display:inline-block;width:5.6px;text-align:center;transform:scaleX(0.85);">1</span></div>
<div class="t" style="right:1486px;top:458.60px;font-size:13px;line-height:13px;color:#383838;"><span style="display:inline-block;width:7.95px;text-align:center;">0</span></div>
<div class="b" style="left:204px;top:458.5px;width:13px;height:13px;background:#fff;border:1px solid #9a9a9a;border-radius:1px;"></div>
<div class="t" style="left:262px;top:458.60px;font-size:13px;line-height:13px;color:#383838;letter-spacing:0.05px;">EC1080</div>
<div class="t" style="left:363px;top:458.60px;font-size:13px;line-height:13px;color:#383838;letter-spacing:0.75px;">Review and Approve Flooring</div>
<div class="t" style="right:706px;top:458.60px;font-size:13px;line-height:13px;color:#383838;"><span style="display:inline-block;width:7.95px;text-align:center;">0</span><span style="display:inline-block;width:3.8px;text-align:center;">.</span><span style="display:inline-block;width:7.95px;text-align:center;">0</span><span style="display:inline-block;width:7.95px;text-align:center;">0</span></div>
<div class="t" style="right:378px;top:458.60px;font-size:13px;line-height:13px;color:#383838;"><span style="display:inline-block;width:7.95px;text-align:center;">0</span><span style="display:inline-block;width:3.8px;text-align:center;">.</span><span style="display:inline-block;width:7.95px;text-align:center;">0</span><span style="display:inline-block;width:7.95px;text-align:center;">0</span></div>
<div class="t" style="right:230px;top:458.60px;font-size:13px;line-height:13px;color:#383838;"><span style="display:inline-block;width:7.95px;text-align:center;">0</span><span style="display:inline-block;width:3.8px;text-align:center;">.</span><span style="display:inline-block;width:7.95px;text-align:center;">0</span><span style="display:inline-block;width:7.95px;text-align:center;">0</span></div>
<div class="t" style="right:82px;top:458.60px;font-size:13px;line-height:13px;color:#383838;"><span style="display:inline-block;width:7.95px;text-align:center;">0</span><span style="display:inline-block;width:3.8px;text-align:center;">.</span><span style="display:inline-block;width:7.95px;text-align:center;">0</span><span style="display:inline-block;width:7.95px;text-align:center;">0</span></div>
<div class="t" style="right:1.7999999999999545px;top:458.60px;font-size:13px;line-height:13px;color:#383838;"><span style="display:inline-block;width:7.95px;text-align:center;">0</span><span style="display:inline-block;width:3.8px;text-align:center;">.</span><span style="display:inline-block;width:7.95px;text-align:center;">0</span><span style="display:inline-block;width:7.95px;text-align:center;">0</span><span style="display:inline-block;width:10.5px;text-align:center;">%</span></div>
<div class="t" style="right:1570px;top:502.60px;font-size:13px;line-height:13px;color:#383838;"><span style="display:inline-block;width:7.95px;text-align:center;">9</span><span style="display:inline-block;width:7.95px;text-align:center;">2</span><span style="display:inline-block;width:5.6px;text-align:center;transform:scaleX(0.85);">1</span><span style="display:inline-block;width:5.6px;text-align:center;transform:scaleX(0.85);">1</span><span style="display:inline-block;width:7.95px;text-align:center;">3</span></div>
<div class="t" style="right:1486px;top:502.60px;font-size:13px;line-height:13px;color:#383838;"><span style="display:inline-block;width:7.95px;text-align:center;">2</span><span style="display:inline-block;width:7.95px;text-align:center;">3</span><span style="display:inline-block;width:7.95px;text-align:center;">6</span><span style="display:inline-block;width:7.95px;text-align:center;">7</span><span style="display:inline-block;width:7.95px;text-align:center;">3</span></div>
<div class="b" style="left:204px;top:502.5px;width:13px;height:13px;background:#fff;border:1px solid #9a9a9a;border-radius:1px;"></div>
<div class="t" style="left:262px;top:502.60px;font-size:13px;line-height:13px;color:#383838;letter-spacing:0.05px;">EC1080</div>
<div class="t" style="left:363px;top:502.60px;font-size:13px;line-height:13px;color:#383838;letter-spacing:0.75px;">Review and Approve Flooring</div>
<div class="t" style="right:941px;top:493.40px;font-size:13px;line-height:13px;color:#383838;"><span style="display:inline-block;width:7.95px;text-align:center;">0</span><span style="display:inline-block;width:7.95px;text-align:center;">2</span><span style="display:inline-block;width:6.9px;text-align:center;">-</span><span style="display:inline-block;width:7.95px;text-align:center;">2</span><span style="display:inline-block;width:7.95px;text-align:center;">5</span><span style="display:inline-block;width:6.9px;text-align:center;">-</span></div>
<div class="t" style="right:944px;top:511.40px;font-size:13px;line-height:13px;color:#383838;"><span style="display:inline-block;width:7.95px;text-align:center;">2</span><span style="display:inline-block;width:7.95px;text-align:center;">0</span><span style="display:inline-block;width:5.6px;text-align:center;transform:scaleX(0.85);">1</span><span style="display:inline-block;width:5.6px;text-align:center;transform:scaleX(0.85);">1</span></div>
<div class="t" style="right:854px;top:502.60px;font-size:13px;line-height:13px;color:#383838;"><span style="display:inline-block;width:7.95px;text-align:center;">0</span><span style="display:inline-block;width:7.95px;text-align:center;">4</span><span style="display:inline-block;width:6.9px;text-align:center;">-</span><span style="display:inline-block;width:5.6px;text-align:center;transform:scaleX(0.85);">1</span><span style="display:inline-block;width:5.6px;text-align:center;transform:scaleX(0.85);">1</span><span style="display:inline-block;width:6.9px;text-align:center;">-</span><span style="display:inline-block;width:7.95px;text-align:center;">2</span><span style="display:inline-block;width:7.95px;text-align:center;">0</span><span style="display:inline-block;width:5.6px;text-align:center;transform:scaleX(0.85);">1</span><span style="display:inline-block;width:5.6px;text-align:center;transform:scaleX(0.85);">1</span></div>
<div class="t" style="right:706px;top:502.60px;font-size:13px;line-height:13px;color:#383838;"><span style="display:inline-block;width:7.95px;text-align:center;">2</span><span style="display:inline-block;width:7.95px;text-align:center;">8</span><span style="display:inline-block;width:3.8px;text-align:center;">.</span><span style="display:inline-block;width:7.95px;text-align:center;">0</span><span style="display:inline-block;width:7.95px;text-align:center;">0</span></div>
<div class="t" style="right:613px;top:493.40px;font-size:13px;line-height:13px;color:#383838;"><span style="display:inline-block;width:7.95px;text-align:center;">0</span><span style="display:inline-block;width:7.95px;text-align:center;">2</span><span style="display:inline-block;width:6.9px;text-align:center;">-</span><span style="display:inline-block;width:7.95px;text-align:center;">2</span><span style="display:inline-block;width:7.95px;text-align:center;">5</span><span style="display:inline-block;width:6.9px;text-align:center;">-</span></div>
<div class="t" style="right:616px;top:511.40px;font-size:13px;line-height:13px;color:#383838;"><span style="display:inline-block;width:7.95px;text-align:center;">2</span><span style="display:inline-block;width:7.95px;text-align:center;">0</span><span style="display:inline-block;width:5.6px;text-align:center;transform:scaleX(0.85);">1</span><span style="display:inline-block;width:5.6px;text-align:center;transform:scaleX(0.85);">1</span></div>
<div class="t" style="right:526px;top:502.60px;font-size:13px;line-height:13px;color:#383838;"><span style="display:inline-block;width:7.95px;text-align:center;">0</span><span style="display:inline-block;width:7.95px;text-align:center;">4</span><span style="display:inline-block;width:6.9px;text-align:center;">-</span><span style="display:inline-block;width:5.6px;text-align:center;transform:scaleX(0.85);">1</span><span style="display:inline-block;width:5.6px;text-align:center;transform:scaleX(0.85);">1</span><span style="display:inline-block;width:6.9px;text-align:center;">-</span><span style="display:inline-block;width:7.95px;text-align:center;">2</span><span style="display:inline-block;width:7.95px;text-align:center;">0</span><span style="display:inline-block;width:5.6px;text-align:center;transform:scaleX(0.85);">1</span><span style="display:inline-block;width:5.6px;text-align:center;transform:scaleX(0.85);">1</span></div>
<div class="t" style="right:378px;top:502.60px;font-size:13px;line-height:13px;color:#383838;"><span style="display:inline-block;width:7.95px;text-align:center;">3</span><span style="display:inline-block;width:7.95px;text-align:center;">2</span><span style="display:inline-block;width:3.8px;text-align:center;">.</span><span style="display:inline-block;width:7.95px;text-align:center;">0</span><span style="display:inline-block;width:7.95px;text-align:center;">0</span></div>
<div class="t" style="right:230px;top:502.60px;font-size:13px;line-height:13px;color:#383838;"><span style="display:inline-block;width:7.95px;text-align:center;">0</span><span style="display:inline-block;width:3.8px;text-align:center;">.</span><span style="display:inline-block;width:7.95px;text-align:center;">0</span><span style="display:inline-block;width:7.95px;text-align:center;">0</span></div>
<div class="t" style="right:82px;top:502.60px;font-size:13px;line-height:13px;color:#383838;"><span style="display:inline-block;width:7.95px;text-align:center;">0</span><span style="display:inline-block;width:3.8px;text-align:center;">.</span><span style="display:inline-block;width:7.95px;text-align:center;">0</span><span style="display:inline-block;width:7.95px;text-align:center;">0</span></div>
<div class="t" style="right:1.7999999999999545px;top:502.60px;font-size:13px;line-height:13px;color:#383838;"><span style="display:inline-block;width:5.6px;text-align:center;transform:scaleX(0.85);">1</span><span style="display:inline-block;width:7.95px;text-align:center;">0</span><span style="display:inline-block;width:7.95px;text-align:center;">0</span><span style="display:inline-block;width:3.8px;text-align:center;">.</span><span style="display:inline-block;width:7.95px;text-align:center;">0</span><span style="display:inline-block;width:7.95px;text-align:center;">0</span><span style="display:inline-block;width:10.5px;text-align:center;">%</span></div>
</div>
<div class="b" style="left:130px;top:897px;width:1642px;height:26px;background:#ededed;background-image:radial-gradient(circle, rgba(90,110,130,0.07) 0.7px, transparent 0.9px);background-size:5px 5px;"></div>
<div class="b" style="left:155px;top:899px;width:1324px;height:21px;background:#c0c0c0;"></div>
<svg class="b" style="left:139px;top:904px;" width="7" height="12" viewBox="0 0 7 12"><path d="M7 0 L0 6 L7 12 Z" fill="#8a8a8a"/></svg>
<svg class="b" style="left:1756px;top:904px;" width="7" height="12" viewBox="0 0 7 12"><path d="M0 0 L7 6 L0 12 Z" fill="#2f2f2f"/></svg>
<div class="b" style="left:130px;top:922px;width:1642px;height:1px;background:#c4c4c4;"></div>
<div class="b" style="left:130px;top:923px;width:1642px;height:42px;background:#ededed;background-image:radial-gradient(circle, rgba(90,110,130,0.07) 0.7px, transparent 0.9px);background-size:5px 5px;"></div>
<div class="b" style="left:169px;top:923px;width:1px;height:42px;background:#d0d0d0;"></div>
<svg class="b" style="left:186px;top:934px;" width="13" height="18" viewBox="0 0 13 18"><rect x="0" y="0" width="3" height="18" fill="#9a9a9a"/><path d="M13 0 L3 9 L13 18 Z" fill="#9a9a9a"/></svg>
<svg class="b" style="left:206px;top:934px;" width="10" height="18" viewBox="0 0 10 18"><path d="M10 0 L0 9 L10 18 Z" fill="#9a9a9a"/></svg>
<div class="b" style="left:221px;top:930px;width:19px;height:29px;background:#fff;border:1px solid #222;"></div>
<div class="t" style="left:30.5px;width:400px;text-align:center;top:937.00px;font-size:13px;line-height:13px;color:#222;">1</div>
<div class="t" style="left:49px;width:400px;text-align:center;top:936.00px;font-size:13px;line-height:13px;color:#222;">2</div>
<div class="t" style="left:68px;width:400px;text-align:center;top:936.00px;font-size:13px;line-height:13px;color:#222;">3</div>
<div class="t" style="left:87px;width:400px;text-align:center;top:936.00px;font-size:13px;line-height:13px;color:#222;">4</div>
<div class="t" style="left:107px;width:400px;text-align:center;top:936.00px;font-size:13px;line-height:13px;color:#222;">5</div>
<div class="t" style="left:126px;width:400px;text-align:center;top:936.00px;font-size:13px;line-height:13px;color:#222;">6</div>
<div class="t" style="left:145px;width:400px;text-align:center;top:936.00px;font-size:13px;line-height:13px;color:#222;">7</div>
<div class="t" style="left:164px;width:400px;text-align:center;top:936.00px;font-size:13px;line-height:13px;color:#222;">8</div>
<div class="t" style="left:184px;width:400px;text-align:center;top:936.00px;font-size:13px;line-height:13px;color:#222;">9</div>
<div class="t" style="left:207px;width:400px;text-align:center;top:936.00px;font-size:13px;line-height:13px;color:#222;">10</div>
<svg class="b" style="left:425px;top:934px;" width="10" height="18" viewBox="0 0 10 18"><path d="M0 0 L10 9 L0 18 Z" fill="#9a9a9a"/></svg>
<svg class="b" style="left:443px;top:934px;" width="13" height="18" viewBox="0 0 13 18"><path d="M0 0 L10 9 L0 18 Z" fill="#9a9a9a"/><rect x="10" y="0" width="3" height="18" fill="#9a9a9a"/></svg>
<div class="t" style="left:481px;top:936.00px;font-size:13px;line-height:13px;color:#8a8a8a;letter-spacing:0.1px;">PAGE SIZE</div>
<div class="b" style="left:554px;top:930px;width:51px;height:28px;background:#fff;border:1px solid #555;"></div>
<div class="b" style="left:582px;top:930px;width:1px;height:28px;background:#555;"></div>
<svg class="b" style="left:588px;top:940px;" width="11" height="7" viewBox="0 0 11 7"><path d="M0 0 H10 L5 6 Z" fill="#222"/></svg>
<div class="t" style="left:556px;top:938.00px;font-size:13px;line-height:13px;color:#333;">10</div>
</body></html>
